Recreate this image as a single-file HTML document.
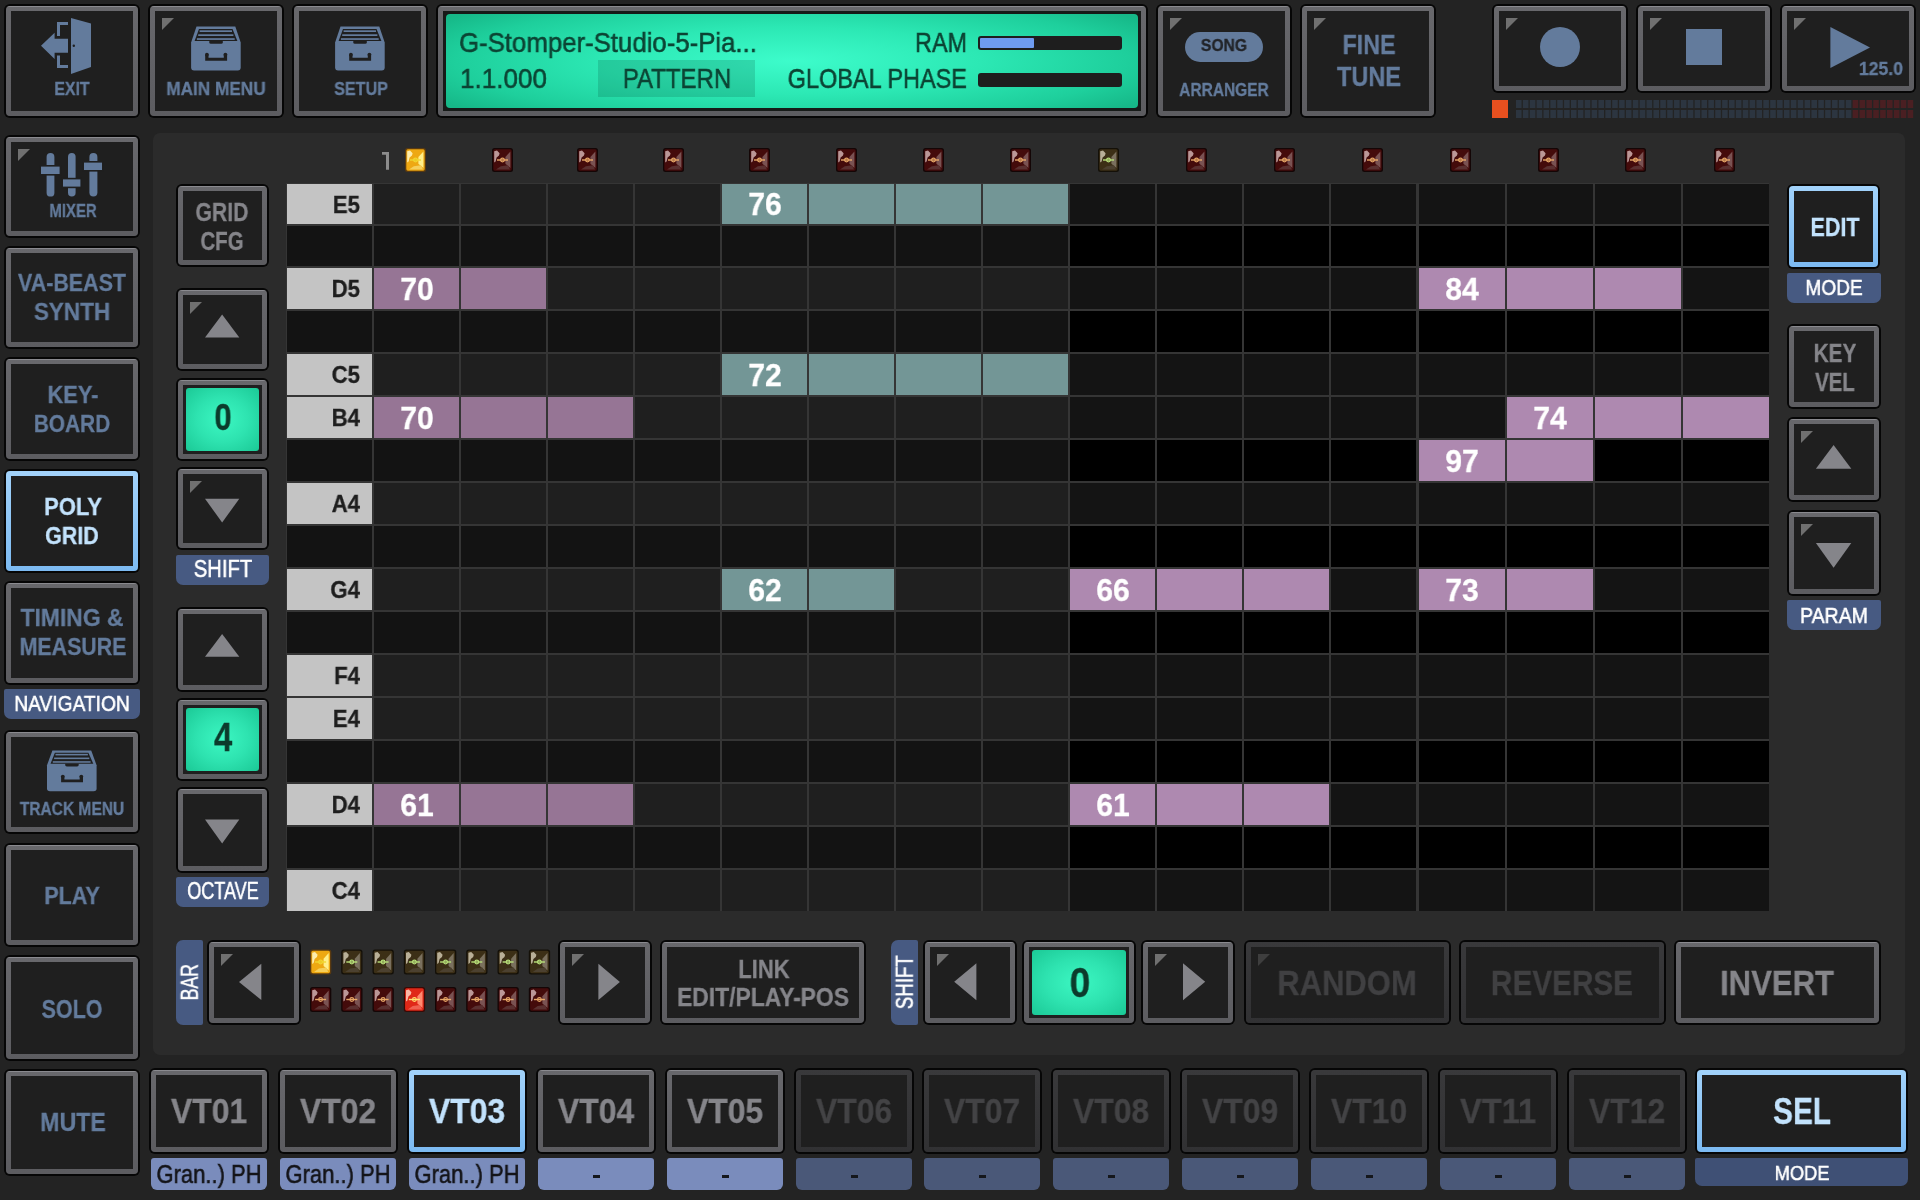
<!DOCTYPE html><html><head><meta charset="utf-8"><style>
html,body{margin:0;padding:0;width:1920px;height:1200px;overflow:hidden;background:#232323;font-family:"Liberation Sans",sans-serif;}
.t{position:absolute;white-space:nowrap;will-change:transform;}
.b{position:absolute;box-sizing:border-box;border:5px solid transparent;background:linear-gradient(#1f1f1f,#1f1f1f) padding-box,linear-gradient(#8a8a8f 0px,#8a8a8f 1px,#68686c 1px,#5c5c60 100%) border-box;border-radius:4px;box-shadow:0 0 0 2px #060606;}
.ba{background:linear-gradient(#1f1f1f,#1f1f1f) padding-box,linear-gradient(#a2d2fa,#7cbaf2) border-box;}
.bd{background:linear-gradient(#1f1f1f,#1f1f1f) padding-box,linear-gradient(#39393b,#313133) border-box;}
.cn{position:absolute;width:0;height:0;border-style:solid;border-width:6px 6px 6px 6px;}
.lb{position:absolute;}
.g{position:absolute;}
</style></head><body>

<div class="g" style="left:153px;top:133px;width:1752px;height:922px;background:#2b2b2b;border-radius:7px"></div>
<div class="b" style="left:6px;top:6px;width:132px;height:110px"></div>
<svg style="position:absolute;left:38px;top:14px" width="60" height="64" viewBox="38 14 60 64"><g fill="#637b9c"><polygon points="71,18 91,23.5 91,67 71,74"/><path d="M57,22 H68 V25 H60 V36 H57 Z"/><path d="M57,55.5 H60 V65 H68 V68 H57 Z"/><polygon points="41,45.7 54.6,32.7 54.6,38.8 68,38.8 68,52.7 54.6,52.7 54.6,59"/></g><circle cx="73.8" cy="45.8" r="1.2" fill="#1f1f1f"/></svg>
<div class="t" style="top:80.89px;font-size:17.73px;line-height:17.73px;color:#637b9c;font-weight:bold;left:-527.75px;width:1200px;text-align:center;transform:scaleX(0.8955);transform-origin:center center;-webkit-text-stroke:0.3px #637b9c;">EXIT</div>
<div class="b" style="left:150px;top:6px;width:132px;height:110px"></div>
<div class="cn" style="left:162px;top:18px;border-color:#707070 transparent transparent #707070"></div>
<svg style="position:absolute;left:180px;top:15px" width="70" height="65" viewBox="180 15 70 65"><g transform="translate(180,15) scale(1.0,1.0)"><path fill="#637b9c" d="M16.5,11.6 H55.3 L60.7,27.6 V52.5 Q60.7,55.5 57.7,55.5 H14.1 Q11.1,55.5 11.1,52.5 V27.6 Z"/><polygon fill="#1f1f1f" points="19,14.1 52.5,14.1 57.4,26 14.6,26"/><rect fill="#637b9c" x="19.6" y="15.3" width="32.4" height="1.7"/><rect fill="#637b9c" x="18.2" y="19.3" width="35.2" height="1.7"/><rect fill="#637b9c" x="16.9" y="23.2" width="37.8" height="1.7"/><path fill="#1f1f1f" d="M29.3,26 H42.8 V27.2 Q42.8,28.8 41.2,28.8 H30.9 Q29.3,28.8 29.3,27.2 Z"/><path fill="#1f1f1f" d="M25.2,40 H28.5 V42.8 H43.8 V40 H47.1 V45.8 H25.2 Z"/><circle cx="26.9" cy="39.6" r="1.9" fill="#1f1f1f"/><circle cx="45.4" cy="39.6" r="1.9" fill="#1f1f1f"/></g></svg>
<div class="t" style="top:80.89px;font-size:17.73px;line-height:17.73px;color:#637b9c;font-weight:bold;left:-383.60px;width:1200px;text-align:center;transform:scaleX(0.9693);transform-origin:center center;-webkit-text-stroke:0.3px #637b9c;">MAIN MENU</div>
<div class="b" style="left:294px;top:6px;width:132px;height:110px"></div>
<svg style="position:absolute;left:324px;top:15px" width="70" height="65" viewBox="324 15 70 65"><g transform="translate(324,15) scale(1.0,1.0)"><path fill="#637b9c" d="M16.5,11.6 H55.3 L60.7,27.6 V52.5 Q60.7,55.5 57.7,55.5 H14.1 Q11.1,55.5 11.1,52.5 V27.6 Z"/><polygon fill="#1f1f1f" points="19,14.1 52.5,14.1 57.4,26 14.6,26"/><rect fill="#637b9c" x="19.6" y="15.3" width="32.4" height="1.7"/><rect fill="#637b9c" x="18.2" y="19.3" width="35.2" height="1.7"/><rect fill="#637b9c" x="16.9" y="23.2" width="37.8" height="1.7"/><path fill="#1f1f1f" d="M29.3,26 H42.8 V27.2 Q42.8,28.8 41.2,28.8 H30.9 Q29.3,28.8 29.3,27.2 Z"/><path fill="#1f1f1f" d="M25.2,40 H28.5 V42.8 H43.8 V40 H47.1 V45.8 H25.2 Z"/><circle cx="26.9" cy="39.6" r="1.9" fill="#1f1f1f"/><circle cx="45.4" cy="39.6" r="1.9" fill="#1f1f1f"/></g></svg>
<div class="t" style="top:80.89px;font-size:17.73px;line-height:17.73px;color:#637b9c;font-weight:bold;left:-239.30px;width:1200px;text-align:center;transform:scaleX(0.9117);transform-origin:center center;-webkit-text-stroke:0.3px #637b9c;">SETUP</div>
<div class="b" style="left:438px;top:6px;width:708px;height:110px;background:linear-gradient(#161a18,#161a18) padding-box,linear-gradient(#8a8a8f 0px,#8a8a8f 1px,#68686c 1px,#5c5c60 100%) border-box;"></div>
<div class="g" style="left:446px;top:14px;width:692px;height:94px;border-radius:4px;background:radial-gradient(ellipse 420px 75px at 50% 50%, #3dfccb 0%, #2ce8b4 45%, #1ecf9c 80%, #16b888 100%);"></div>
<div class="t" style="top:28.77px;font-size:27.91px;line-height:27.91px;color:#0c4434;font-weight:normal;left:459.20px;width:1200px;text-align:left;transform:scaleX(0.9237);transform-origin:left center;-webkit-text-stroke:0.55px #0c4434;">G-Stomper-Studio-5-Pia...</div>
<div class="t" style="top:65.07px;font-size:27.91px;line-height:27.91px;color:#0c4434;font-weight:normal;left:460.30px;width:1200px;text-align:left;transform:scaleX(0.9345);transform-origin:left center;-webkit-text-stroke:0.55px #0c4434;">1.1.000</div>
<div class="g" style="left:598px;top:60px;width:157px;height:37px;background:rgba(0,60,40,0.17)"></div>
<div class="t" style="top:65.07px;font-size:27.91px;line-height:27.91px;color:#0c4434;font-weight:normal;left:77.00px;width:1200px;text-align:center;transform:scaleX(0.8596);transform-origin:center center;-webkit-text-stroke:0.55px #0c4434;">PATTERN</div>
<div class="t" style="top:28.77px;font-size:27.91px;line-height:27.91px;color:#0c4434;font-weight:normal;left:-233.00px;width:1200px;text-align:right;transform:scaleX(0.8386);transform-origin:right center;-webkit-text-stroke:0.55px #0c4434;">RAM</div>
<div class="t" style="top:65.07px;font-size:27.91px;line-height:27.91px;color:#0c4434;font-weight:normal;left:-233.00px;width:1200px;text-align:right;transform:scaleX(0.8422);transform-origin:right center;-webkit-text-stroke:0.55px #0c4434;">GLOBAL PHASE</div>
<div class="g" style="left:978px;top:36px;width:144px;height:14px;background:#1e1e1e;border-radius:3px"></div>
<div class="g" style="left:980px;top:38px;width:54px;height:10px;background:#6e9cf0;border-radius:1px"></div>
<div class="g" style="left:978px;top:73px;width:144px;height:14px;background:#1e1e1e;border-radius:3px"></div>
<div class="b" style="left:1158px;top:6px;width:132px;height:110px"></div>
<div class="cn" style="left:1170px;top:18px;border-color:#707070 transparent transparent #707070"></div>
<div class="g" style="left:1185px;top:32px;width:78px;height:30px;background:#637b9c;border-radius:15px"></div>
<div class="t" style="top:37.97px;font-size:16.57px;line-height:16.57px;color:#222428;font-weight:bold;left:624.00px;width:1200px;text-align:center;transform:scaleX(0.9427);transform-origin:center center;-webkit-text-stroke:0.3px #222428;">SONG</div>
<div class="t" style="top:79.96px;font-size:19.19px;line-height:19.19px;color:#637b9c;font-weight:bold;left:624.20px;width:1200px;text-align:center;transform:scaleX(0.8082);transform-origin:center center;-webkit-text-stroke:0.3px #637b9c;">ARRANGER</div>
<div class="b" style="left:1302px;top:6px;width:132px;height:110px"></div>
<div class="cn" style="left:1314px;top:18px;border-color:#707070 transparent transparent #707070"></div>
<div class="t" style="top:31.46px;font-size:27.33px;line-height:27.33px;color:#637b9c;font-weight:bold;left:768.50px;width:1200px;text-align:center;transform:scaleX(0.8514);transform-origin:center center;-webkit-text-stroke:0.3px #637b9c;">FINE</div>
<div class="t" style="top:63.36px;font-size:27.33px;line-height:27.33px;color:#637b9c;font-weight:bold;left:768.70px;width:1200px;text-align:center;transform:scaleX(0.8604);transform-origin:center center;-webkit-text-stroke:0.3px #637b9c;">TUNE</div>
<div class="b" style="left:1494px;top:6px;width:132px;height:85px"></div>
<div class="cn" style="left:1506px;top:18px;border-color:#707070 transparent transparent #707070"></div>
<svg style="position:absolute;left:1530px;top:20px" width="60" height="56" viewBox="1530 20 60 56"><circle cx="1560" cy="47" r="20" fill="#637b9c"/></svg>
<div class="b" style="left:1638px;top:6px;width:132px;height:85px"></div>
<div class="cn" style="left:1650px;top:18px;border-color:#707070 transparent transparent #707070"></div>
<div class="g" style="left:1686px;top:29px;width:36px;height:36px;background:#637b9c"></div>
<div class="b" style="left:1782px;top:6px;width:132px;height:85px"></div>
<div class="cn" style="left:1794px;top:18px;border-color:#707070 transparent transparent #707070"></div>
<svg style="position:absolute;left:1820px;top:20px" width="60" height="56" viewBox="1820 20 60 56"><polygon points="1830.4,27 1870,47.4 1830.4,68" fill="#637b9c"/></svg>
<div class="t" style="top:60.47px;font-size:18.46px;line-height:18.46px;color:#637b9c;font-weight:bold;left:703.20px;width:1200px;text-align:right;transform:scaleX(0.9527);transform-origin:right center;-webkit-text-stroke:0.3px #637b9c;">125.0</div>
<div class="g" style="left:1492px;top:100px;width:16px;height:18px;background:#e8501f"></div>
<svg style="position:absolute;left:1510px;top:96px" width="410" height="26" viewBox="1510 96 410 26"><rect x="1516.00" y="100" width="5.6" height="8" fill="#2c3540"/><rect x="1516.00" y="110" width="5.6" height="8" fill="#2c3540"/><rect x="1522.87" y="100" width="5.6" height="8" fill="#2c3540"/><rect x="1522.87" y="110" width="5.6" height="8" fill="#2c3540"/><rect x="1529.74" y="100" width="5.6" height="8" fill="#2c3540"/><rect x="1529.74" y="110" width="5.6" height="8" fill="#2c3540"/><rect x="1536.61" y="100" width="5.6" height="8" fill="#2c3540"/><rect x="1536.61" y="110" width="5.6" height="8" fill="#2c3540"/><rect x="1543.48" y="100" width="5.6" height="8" fill="#2c3540"/><rect x="1543.48" y="110" width="5.6" height="8" fill="#2c3540"/><rect x="1550.35" y="100" width="5.6" height="8" fill="#2c3540"/><rect x="1550.35" y="110" width="5.6" height="8" fill="#2c3540"/><rect x="1557.22" y="100" width="5.6" height="8" fill="#2c3540"/><rect x="1557.22" y="110" width="5.6" height="8" fill="#2c3540"/><rect x="1564.09" y="100" width="5.6" height="8" fill="#2c3540"/><rect x="1564.09" y="110" width="5.6" height="8" fill="#2c3540"/><rect x="1570.96" y="100" width="5.6" height="8" fill="#2c3540"/><rect x="1570.96" y="110" width="5.6" height="8" fill="#2c3540"/><rect x="1577.83" y="100" width="5.6" height="8" fill="#2c3540"/><rect x="1577.83" y="110" width="5.6" height="8" fill="#2c3540"/><rect x="1584.70" y="100" width="5.6" height="8" fill="#2c3540"/><rect x="1584.70" y="110" width="5.6" height="8" fill="#2c3540"/><rect x="1591.57" y="100" width="5.6" height="8" fill="#2c3540"/><rect x="1591.57" y="110" width="5.6" height="8" fill="#2c3540"/><rect x="1598.44" y="100" width="5.6" height="8" fill="#2c3540"/><rect x="1598.44" y="110" width="5.6" height="8" fill="#2c3540"/><rect x="1605.31" y="100" width="5.6" height="8" fill="#2c3540"/><rect x="1605.31" y="110" width="5.6" height="8" fill="#2c3540"/><rect x="1612.18" y="100" width="5.6" height="8" fill="#2c3540"/><rect x="1612.18" y="110" width="5.6" height="8" fill="#2c3540"/><rect x="1619.05" y="100" width="5.6" height="8" fill="#2c3540"/><rect x="1619.05" y="110" width="5.6" height="8" fill="#2c3540"/><rect x="1625.92" y="100" width="5.6" height="8" fill="#2c3540"/><rect x="1625.92" y="110" width="5.6" height="8" fill="#2c3540"/><rect x="1632.79" y="100" width="5.6" height="8" fill="#2c3540"/><rect x="1632.79" y="110" width="5.6" height="8" fill="#2c3540"/><rect x="1639.66" y="100" width="5.6" height="8" fill="#2c3540"/><rect x="1639.66" y="110" width="5.6" height="8" fill="#2c3540"/><rect x="1646.53" y="100" width="5.6" height="8" fill="#2c3540"/><rect x="1646.53" y="110" width="5.6" height="8" fill="#2c3540"/><rect x="1653.40" y="100" width="5.6" height="8" fill="#2c3540"/><rect x="1653.40" y="110" width="5.6" height="8" fill="#2c3540"/><rect x="1660.27" y="100" width="5.6" height="8" fill="#2c3540"/><rect x="1660.27" y="110" width="5.6" height="8" fill="#2c3540"/><rect x="1667.14" y="100" width="5.6" height="8" fill="#2c3540"/><rect x="1667.14" y="110" width="5.6" height="8" fill="#2c3540"/><rect x="1674.01" y="100" width="5.6" height="8" fill="#2c3540"/><rect x="1674.01" y="110" width="5.6" height="8" fill="#2c3540"/><rect x="1680.88" y="100" width="5.6" height="8" fill="#2c3540"/><rect x="1680.88" y="110" width="5.6" height="8" fill="#2c3540"/><rect x="1687.75" y="100" width="5.6" height="8" fill="#2c3540"/><rect x="1687.75" y="110" width="5.6" height="8" fill="#2c3540"/><rect x="1694.62" y="100" width="5.6" height="8" fill="#2c3540"/><rect x="1694.62" y="110" width="5.6" height="8" fill="#2c3540"/><rect x="1701.49" y="100" width="5.6" height="8" fill="#2c3540"/><rect x="1701.49" y="110" width="5.6" height="8" fill="#2c3540"/><rect x="1708.36" y="100" width="5.6" height="8" fill="#2c3540"/><rect x="1708.36" y="110" width="5.6" height="8" fill="#2c3540"/><rect x="1715.23" y="100" width="5.6" height="8" fill="#2c3540"/><rect x="1715.23" y="110" width="5.6" height="8" fill="#2c3540"/><rect x="1722.10" y="100" width="5.6" height="8" fill="#2c3540"/><rect x="1722.10" y="110" width="5.6" height="8" fill="#2c3540"/><rect x="1728.97" y="100" width="5.6" height="8" fill="#2c3540"/><rect x="1728.97" y="110" width="5.6" height="8" fill="#2c3540"/><rect x="1735.84" y="100" width="5.6" height="8" fill="#2c3540"/><rect x="1735.84" y="110" width="5.6" height="8" fill="#2c3540"/><rect x="1742.71" y="100" width="5.6" height="8" fill="#2c3540"/><rect x="1742.71" y="110" width="5.6" height="8" fill="#2c3540"/><rect x="1749.58" y="100" width="5.6" height="8" fill="#2c3540"/><rect x="1749.58" y="110" width="5.6" height="8" fill="#2c3540"/><rect x="1756.45" y="100" width="5.6" height="8" fill="#2c3540"/><rect x="1756.45" y="110" width="5.6" height="8" fill="#2c3540"/><rect x="1763.32" y="100" width="5.6" height="8" fill="#2c3540"/><rect x="1763.32" y="110" width="5.6" height="8" fill="#2c3540"/><rect x="1770.19" y="100" width="5.6" height="8" fill="#2c3540"/><rect x="1770.19" y="110" width="5.6" height="8" fill="#2c3540"/><rect x="1777.06" y="100" width="5.6" height="8" fill="#2c3540"/><rect x="1777.06" y="110" width="5.6" height="8" fill="#2c3540"/><rect x="1783.93" y="100" width="5.6" height="8" fill="#2c3540"/><rect x="1783.93" y="110" width="5.6" height="8" fill="#2c3540"/><rect x="1790.80" y="100" width="5.6" height="8" fill="#2c3540"/><rect x="1790.80" y="110" width="5.6" height="8" fill="#2c3540"/><rect x="1797.67" y="100" width="5.6" height="8" fill="#2c3540"/><rect x="1797.67" y="110" width="5.6" height="8" fill="#2c3540"/><rect x="1804.54" y="100" width="5.6" height="8" fill="#2c3540"/><rect x="1804.54" y="110" width="5.6" height="8" fill="#2c3540"/><rect x="1811.41" y="100" width="5.6" height="8" fill="#2c3540"/><rect x="1811.41" y="110" width="5.6" height="8" fill="#2c3540"/><rect x="1818.28" y="100" width="5.6" height="8" fill="#2c3540"/><rect x="1818.28" y="110" width="5.6" height="8" fill="#2c3540"/><rect x="1825.15" y="100" width="5.6" height="8" fill="#2c3540"/><rect x="1825.15" y="110" width="5.6" height="8" fill="#2c3540"/><rect x="1832.02" y="100" width="5.6" height="8" fill="#2c3540"/><rect x="1832.02" y="110" width="5.6" height="8" fill="#2c3540"/><rect x="1838.89" y="100" width="5.6" height="8" fill="#2c3540"/><rect x="1838.89" y="110" width="5.6" height="8" fill="#2c3540"/><rect x="1845.76" y="100" width="5.6" height="8" fill="#2c3540"/><rect x="1845.76" y="110" width="5.6" height="8" fill="#2c3540"/><rect x="1852.63" y="100" width="5.6" height="8" fill="#4a1f22"/><rect x="1852.63" y="110" width="5.6" height="8" fill="#4a1f22"/><rect x="1859.50" y="100" width="5.6" height="8" fill="#4a1f22"/><rect x="1859.50" y="110" width="5.6" height="8" fill="#4a1f22"/><rect x="1866.37" y="100" width="5.6" height="8" fill="#4a1f22"/><rect x="1866.37" y="110" width="5.6" height="8" fill="#4a1f22"/><rect x="1873.24" y="100" width="5.6" height="8" fill="#4a1f22"/><rect x="1873.24" y="110" width="5.6" height="8" fill="#4a1f22"/><rect x="1880.11" y="100" width="5.6" height="8" fill="#4a1f22"/><rect x="1880.11" y="110" width="5.6" height="8" fill="#4a1f22"/><rect x="1886.98" y="100" width="5.6" height="8" fill="#4a1f22"/><rect x="1886.98" y="110" width="5.6" height="8" fill="#4a1f22"/><rect x="1893.85" y="100" width="5.6" height="8" fill="#4a1f22"/><rect x="1893.85" y="110" width="5.6" height="8" fill="#4a1f22"/><rect x="1900.72" y="100" width="5.6" height="8" fill="#4a1f22"/><rect x="1900.72" y="110" width="5.6" height="8" fill="#4a1f22"/><rect x="1907.59" y="100" width="5.6" height="8" fill="#4a1f22"/><rect x="1907.59" y="110" width="5.6" height="8" fill="#4a1f22"/></svg>
<div class="b" style="left:6px;top:137px;width:132px;height:99px"></div>
<div class="cn" style="left:18px;top:149px;border-color:#707070 transparent transparent #707070"></div>
<svg style="position:absolute;left:36px;top:150px" width="72" height="50" viewBox="36 150 72 50"><g fill="#637b9c"><rect x="46.6" y="153" width="7.8" height="43.6" rx="3.9"/><rect x="68" y="153" width="7.6" height="43.6" rx="3.8"/><rect x="89.4" y="153" width="8" height="43.6" rx="4"/></g><g fill="#1f1f1f"><rect x="39.5" y="165" width="21.6" height="10.6"/><rect x="61.5" y="177.8" width="20.4" height="10.4"/><rect x="82.5" y="161" width="21" height="10.6"/></g><g fill="#637b9c"><rect x="41" y="166.6" width="18.6" height="7.4"/><rect x="63" y="179.4" width="17.4" height="7.2"/><rect x="84" y="162.6" width="18" height="7.4"/></g></svg>
<div class="t" style="top:203.23px;font-size:17.44px;line-height:17.44px;color:#637b9c;font-weight:bold;left:-527.30px;width:1200px;text-align:center;transform:scaleX(0.8581);transform-origin:center center;-webkit-text-stroke:0.3px #637b9c;">MIXER</div>
<div class="b" style="left:6px;top:248px;width:132px;height:99px"></div>
<div class="t" style="top:271.08px;font-size:24.71px;line-height:24.71px;color:#637b9c;font-weight:bold;left:-527.60px;width:1200px;text-align:center;transform:scaleX(0.8677);transform-origin:center center;-webkit-text-stroke:0.3px #637b9c;">VA-BEAST</div>
<div class="t" style="top:300.08px;font-size:24.71px;line-height:24.71px;color:#637b9c;font-weight:bold;left:-527.80px;width:1200px;text-align:center;transform:scaleX(0.9123);transform-origin:center center;-webkit-text-stroke:0.3px #637b9c;">SYNTH</div>
<div class="b" style="left:6px;top:359px;width:132px;height:100px"></div>
<div class="t" style="top:383.08px;font-size:24.71px;line-height:24.71px;color:#637b9c;font-weight:bold;left:-527.50px;width:1200px;text-align:center;transform:scaleX(0.8843);transform-origin:center center;-webkit-text-stroke:0.3px #637b9c;">KEY-</div>
<div class="t" style="top:412.08px;font-size:24.71px;line-height:24.71px;color:#637b9c;font-weight:bold;left:-527.80px;width:1200px;text-align:center;transform:scaleX(0.8432);transform-origin:center center;-webkit-text-stroke:0.3px #637b9c;">BOARD</div>
<div class="b ba" style="left:6px;top:471px;width:132px;height:100px"></div>
<div class="t" style="top:495.08px;font-size:24.71px;line-height:24.71px;color:#c2e2fc;font-weight:bold;left:-527.40px;width:1200px;text-align:center;transform:scaleX(0.8922);transform-origin:center center;-webkit-text-stroke:0.3px #c2e2fc;">POLY</div>
<div class="t" style="top:524.08px;font-size:24.71px;line-height:24.71px;color:#c2e2fc;font-weight:bold;left:-527.70px;width:1200px;text-align:center;transform:scaleX(0.8645);transform-origin:center center;-webkit-text-stroke:0.3px #c2e2fc;">GRID</div>
<div class="b" style="left:6px;top:583px;width:132px;height:100px"></div>
<div class="t" style="top:606.08px;font-size:24.71px;line-height:24.71px;color:#637b9c;font-weight:bold;left:-528.00px;width:1200px;text-align:center;transform:scaleX(0.9263);transform-origin:center center;-webkit-text-stroke:0.3px #637b9c;">TIMING &amp;</div>
<div class="t" style="top:635.08px;font-size:24.71px;line-height:24.71px;color:#637b9c;font-weight:bold;left:-527.50px;width:1200px;text-align:center;transform:scaleX(0.8643);transform-origin:center center;-webkit-text-stroke:0.3px #637b9c;">MEASURE</div>
<div class="lb" style="left:4px;top:689px;width:136px;height:30px;background:#475a82;border-radius:2px 2px 7px 7px"></div>
<div class="t" style="top:692.26px;font-size:22.97px;line-height:22.97px;color:#fff;font-weight:normal;left:-528.00px;width:1200px;text-align:center;transform:scaleX(0.8356);transform-origin:center center;-webkit-text-stroke:0.55px #fff;">NAVIGATION</div>
<div class="b" style="left:6px;top:732px;width:132px;height:100px"></div>
<svg style="position:absolute;left:36px;top:740px" width="72" height="56" viewBox="36 740 72 56"><g transform="translate(35.9,739.6) scale(1.0,0.93)"><path fill="#637b9c" d="M16.5,11.6 H55.3 L60.7,27.6 V52.5 Q60.7,55.5 57.7,55.5 H14.1 Q11.1,55.5 11.1,52.5 V27.6 Z"/><polygon fill="#1f1f1f" points="19,14.1 52.5,14.1 57.4,26 14.6,26"/><rect fill="#637b9c" x="19.6" y="15.3" width="32.4" height="1.7"/><rect fill="#637b9c" x="18.2" y="19.3" width="35.2" height="1.7"/><rect fill="#637b9c" x="16.9" y="23.2" width="37.8" height="1.7"/><path fill="#1f1f1f" d="M29.3,26 H42.8 V27.2 Q42.8,28.8 41.2,28.8 H30.9 Q29.3,28.8 29.3,27.2 Z"/><path fill="#1f1f1f" d="M25.2,40 H28.5 V42.8 H43.8 V40 H47.1 V45.8 H25.2 Z"/><circle cx="26.9" cy="39.6" r="1.9" fill="#1f1f1f"/><circle cx="45.4" cy="39.6" r="1.9" fill="#1f1f1f"/></g></svg>
<div class="t" style="top:800.79px;font-size:17.73px;line-height:17.73px;color:#637b9c;font-weight:bold;left:-528.00px;width:1200px;text-align:center;transform:scaleX(0.8759);transform-origin:center center;-webkit-text-stroke:0.3px #637b9c;">TRACK MENU</div>
<div class="b" style="left:6px;top:845px;width:132px;height:100px"></div>
<div class="t" style="top:884.17px;font-size:24.13px;line-height:24.13px;color:#637b9c;font-weight:bold;left:-527.55px;width:1200px;text-align:center;transform:scaleX(0.8933);transform-origin:center center;-webkit-text-stroke:0.3px #637b9c;">PLAY</div>
<div class="b" style="left:6px;top:957px;width:132px;height:102px"></div>
<div class="t" style="top:996.53px;font-size:25.00px;line-height:25.00px;color:#637b9c;font-weight:bold;left:-528.00px;width:1200px;text-align:center;transform:scaleX(0.8582);transform-origin:center center;-webkit-text-stroke:0.3px #637b9c;">SOLO</div>
<div class="b" style="left:6px;top:1071px;width:132px;height:103px"></div>
<div class="t" style="top:1110.03px;font-size:25.00px;line-height:25.00px;color:#637b9c;font-weight:bold;left:-527.25px;width:1200px;text-align:center;transform:scaleX(0.9248);transform-origin:center center;-webkit-text-stroke:0.3px #637b9c;">MUTE</div>
<div class="b" style="left:178px;top:186px;width:89px;height:79px"></div>
<div class="t" style="top:199.71px;font-size:25.15px;line-height:25.15px;color:#85858a;font-weight:bold;left:-377.80px;width:1200px;text-align:center;transform:scaleX(0.8431);transform-origin:center center;-webkit-text-stroke:0.3px #85858a;">GRID</div>
<div class="t" style="top:228.71px;font-size:25.15px;line-height:25.15px;color:#85858a;font-weight:bold;left:-377.65px;width:1200px;text-align:center;transform:scaleX(0.8157);transform-origin:center center;-webkit-text-stroke:0.3px #85858a;">CFG</div>
<div class="b" style="left:178px;top:290px;width:89px;height:79px"></div>
<div class="cn" style="left:190px;top:302px;border-color:#707070 transparent transparent #707070"></div>
<svg style="position:absolute;left:200px;top:310px" width="45" height="32" viewBox="200 310 45 32"><polygon points="205,337.4 239.3,337.4 222.15,314.6" fill="#85858a"/></svg>
<div class="b" style="left:178px;top:380px;width:89px;height:79px"></div>
<div class="g" style="left:186px;top:388px;width:73px;height:63px;border-radius:3px;background:radial-gradient(ellipse at 50% 50%, #3cf7c2 0%, #2ee3b0 50%, #1bc996 100%);"></div>
<div class="t" style="top:398.80px;font-size:37.79px;line-height:37.79px;color:#0c3b2c;font-weight:bold;left:-376.90px;width:1200px;text-align:center;transform:scaleX(0.8234);transform-origin:center center;-webkit-text-stroke:0.3px #0c3b2c;">0</div>
<div class="b" style="left:178px;top:469px;width:89px;height:79px"></div>
<div class="cn" style="left:190px;top:481px;border-color:#707070 transparent transparent #707070"></div>
<svg style="position:absolute;left:200px;top:494px" width="45" height="32" viewBox="200 494 45 32"><polygon points="205,498.8 239.3,498.8 222.15,522.5" fill="#85858a"/></svg>
<div class="lb" style="left:176px;top:555px;width:93px;height:30px;background:#475a82;border-radius:2px 2px 7px 7px"></div>
<div class="t" style="top:558.04px;font-size:23.69px;line-height:23.69px;color:#fff;font-weight:normal;left:-377.50px;width:1200px;text-align:center;transform:scaleX(0.8547);transform-origin:center center;-webkit-text-stroke:0.55px #fff;">SHIFT</div>
<div class="b" style="left:178px;top:609px;width:89px;height:81px"></div>
<svg style="position:absolute;left:200px;top:630px" width="45" height="32" viewBox="200 630 45 32"><polygon points="205,656.8 239.3,656.8 222.15,634" fill="#85858a"/></svg>
<div class="b" style="left:178px;top:700px;width:89px;height:79px"></div>
<div class="g" style="left:186px;top:708px;width:73px;height:63px;border-radius:3px;background:radial-gradient(ellipse at 50% 50%, #3cf7c2 0%, #2ee3b0 50%, #1bc996 100%);"></div>
<div class="t" style="top:718.46px;font-size:39.97px;line-height:39.97px;color:#0c3b2c;font-weight:bold;left:-376.80px;width:1200px;text-align:center;transform:scaleX(0.8279);transform-origin:center center;-webkit-text-stroke:0.3px #0c3b2c;">4</div>
<div class="b" style="left:178px;top:789px;width:89px;height:82px"></div>
<svg style="position:absolute;left:200px;top:815px" width="45" height="32" viewBox="200 815 45 32"><polygon points="205,819.6 239.3,819.6 222.15,843.6" fill="#85858a"/></svg>
<div class="lb" style="left:176px;top:877px;width:93px;height:30px;background:#475a82;border-radius:2px 2px 7px 7px"></div>
<div class="t" style="top:880.31px;font-size:23.26px;line-height:23.26px;color:#fff;font-weight:normal;left:-377.50px;width:1200px;text-align:center;transform:scaleX(0.7758);transform-origin:center center;-webkit-text-stroke:0.55px #fff;">OCTAVE</div>
<div class="g" style="left:286px;top:183px;width:1483px;height:728px;background:#353535"></div>
<div class="g" style="left:287px;top:184px;width:85px;height:40px;background:#c4c4c4"></div><div class="g" style="left:374px;top:184px;width:85px;height:40px;background:#1f1f1f"></div><div class="g" style="left:461px;top:184px;width:85px;height:40px;background:#1f1f1f"></div><div class="g" style="left:548px;top:184px;width:85px;height:40px;background:#1f1f1f"></div><div class="g" style="left:635px;top:184px;width:85px;height:40px;background:#1f1f1f"></div><div class="g" style="left:722px;top:184px;width:85px;height:40px;background:#1f1f1f"></div><div class="g" style="left:809px;top:184px;width:85px;height:40px;background:#1f1f1f"></div><div class="g" style="left:896px;top:184px;width:85px;height:40px;background:#1f1f1f"></div><div class="g" style="left:983px;top:184px;width:85px;height:40px;background:#1f1f1f"></div><div class="g" style="left:1070px;top:184px;width:85px;height:40px;background:#141414"></div><div class="g" style="left:1157px;top:184px;width:85px;height:40px;background:#141414"></div><div class="g" style="left:1244px;top:184px;width:85px;height:40px;background:#141414"></div><div class="g" style="left:1331px;top:184px;width:85px;height:40px;background:#141414"></div><div class="g" style="left:1419px;top:184px;width:86px;height:40px;background:#141414"></div><div class="g" style="left:1507px;top:184px;width:86px;height:40px;background:#141414"></div><div class="g" style="left:1595px;top:184px;width:86px;height:40px;background:#141414"></div><div class="g" style="left:1683px;top:184px;width:86px;height:40px;background:#141414"></div><div class="g" style="left:287px;top:226px;width:85px;height:40px;background:#131313"></div><div class="g" style="left:374px;top:226px;width:85px;height:40px;background:#131313"></div><div class="g" style="left:461px;top:226px;width:85px;height:40px;background:#131313"></div><div class="g" style="left:548px;top:226px;width:85px;height:40px;background:#131313"></div><div class="g" style="left:635px;top:226px;width:85px;height:40px;background:#131313"></div><div class="g" style="left:722px;top:226px;width:85px;height:40px;background:#131313"></div><div class="g" style="left:809px;top:226px;width:85px;height:40px;background:#131313"></div><div class="g" style="left:896px;top:226px;width:85px;height:40px;background:#131313"></div><div class="g" style="left:983px;top:226px;width:85px;height:40px;background:#131313"></div><div class="g" style="left:1070px;top:226px;width:85px;height:40px;background:#000000"></div><div class="g" style="left:1157px;top:226px;width:85px;height:40px;background:#000000"></div><div class="g" style="left:1244px;top:226px;width:85px;height:40px;background:#000000"></div><div class="g" style="left:1331px;top:226px;width:85px;height:40px;background:#000000"></div><div class="g" style="left:1419px;top:226px;width:86px;height:40px;background:#000000"></div><div class="g" style="left:1507px;top:226px;width:86px;height:40px;background:#000000"></div><div class="g" style="left:1595px;top:226px;width:86px;height:40px;background:#000000"></div><div class="g" style="left:1683px;top:226px;width:86px;height:40px;background:#000000"></div><div class="g" style="left:287px;top:268px;width:85px;height:41px;background:#c4c4c4"></div><div class="g" style="left:374px;top:268px;width:85px;height:41px;background:#1f1f1f"></div><div class="g" style="left:461px;top:268px;width:85px;height:41px;background:#1f1f1f"></div><div class="g" style="left:548px;top:268px;width:85px;height:41px;background:#1f1f1f"></div><div class="g" style="left:635px;top:268px;width:85px;height:41px;background:#1f1f1f"></div><div class="g" style="left:722px;top:268px;width:85px;height:41px;background:#1f1f1f"></div><div class="g" style="left:809px;top:268px;width:85px;height:41px;background:#1f1f1f"></div><div class="g" style="left:896px;top:268px;width:85px;height:41px;background:#1f1f1f"></div><div class="g" style="left:983px;top:268px;width:85px;height:41px;background:#1f1f1f"></div><div class="g" style="left:1070px;top:268px;width:85px;height:41px;background:#141414"></div><div class="g" style="left:1157px;top:268px;width:85px;height:41px;background:#141414"></div><div class="g" style="left:1244px;top:268px;width:85px;height:41px;background:#141414"></div><div class="g" style="left:1331px;top:268px;width:85px;height:41px;background:#141414"></div><div class="g" style="left:1419px;top:268px;width:86px;height:41px;background:#141414"></div><div class="g" style="left:1507px;top:268px;width:86px;height:41px;background:#141414"></div><div class="g" style="left:1595px;top:268px;width:86px;height:41px;background:#141414"></div><div class="g" style="left:1683px;top:268px;width:86px;height:41px;background:#141414"></div><div class="g" style="left:287px;top:311px;width:85px;height:41px;background:#131313"></div><div class="g" style="left:374px;top:311px;width:85px;height:41px;background:#131313"></div><div class="g" style="left:461px;top:311px;width:85px;height:41px;background:#131313"></div><div class="g" style="left:548px;top:311px;width:85px;height:41px;background:#131313"></div><div class="g" style="left:635px;top:311px;width:85px;height:41px;background:#131313"></div><div class="g" style="left:722px;top:311px;width:85px;height:41px;background:#131313"></div><div class="g" style="left:809px;top:311px;width:85px;height:41px;background:#131313"></div><div class="g" style="left:896px;top:311px;width:85px;height:41px;background:#131313"></div><div class="g" style="left:983px;top:311px;width:85px;height:41px;background:#131313"></div><div class="g" style="left:1070px;top:311px;width:85px;height:41px;background:#000000"></div><div class="g" style="left:1157px;top:311px;width:85px;height:41px;background:#000000"></div><div class="g" style="left:1244px;top:311px;width:85px;height:41px;background:#000000"></div><div class="g" style="left:1331px;top:311px;width:85px;height:41px;background:#000000"></div><div class="g" style="left:1419px;top:311px;width:86px;height:41px;background:#000000"></div><div class="g" style="left:1507px;top:311px;width:86px;height:41px;background:#000000"></div><div class="g" style="left:1595px;top:311px;width:86px;height:41px;background:#000000"></div><div class="g" style="left:1683px;top:311px;width:86px;height:41px;background:#000000"></div><div class="g" style="left:287px;top:354px;width:85px;height:41px;background:#c4c4c4"></div><div class="g" style="left:374px;top:354px;width:85px;height:41px;background:#1f1f1f"></div><div class="g" style="left:461px;top:354px;width:85px;height:41px;background:#1f1f1f"></div><div class="g" style="left:548px;top:354px;width:85px;height:41px;background:#1f1f1f"></div><div class="g" style="left:635px;top:354px;width:85px;height:41px;background:#1f1f1f"></div><div class="g" style="left:722px;top:354px;width:85px;height:41px;background:#1f1f1f"></div><div class="g" style="left:809px;top:354px;width:85px;height:41px;background:#1f1f1f"></div><div class="g" style="left:896px;top:354px;width:85px;height:41px;background:#1f1f1f"></div><div class="g" style="left:983px;top:354px;width:85px;height:41px;background:#1f1f1f"></div><div class="g" style="left:1070px;top:354px;width:85px;height:41px;background:#141414"></div><div class="g" style="left:1157px;top:354px;width:85px;height:41px;background:#141414"></div><div class="g" style="left:1244px;top:354px;width:85px;height:41px;background:#141414"></div><div class="g" style="left:1331px;top:354px;width:85px;height:41px;background:#141414"></div><div class="g" style="left:1419px;top:354px;width:86px;height:41px;background:#141414"></div><div class="g" style="left:1507px;top:354px;width:86px;height:41px;background:#141414"></div><div class="g" style="left:1595px;top:354px;width:86px;height:41px;background:#141414"></div><div class="g" style="left:1683px;top:354px;width:86px;height:41px;background:#141414"></div><div class="g" style="left:287px;top:397px;width:85px;height:41px;background:#c4c4c4"></div><div class="g" style="left:374px;top:397px;width:85px;height:41px;background:#1f1f1f"></div><div class="g" style="left:461px;top:397px;width:85px;height:41px;background:#1f1f1f"></div><div class="g" style="left:548px;top:397px;width:85px;height:41px;background:#1f1f1f"></div><div class="g" style="left:635px;top:397px;width:85px;height:41px;background:#1f1f1f"></div><div class="g" style="left:722px;top:397px;width:85px;height:41px;background:#1f1f1f"></div><div class="g" style="left:809px;top:397px;width:85px;height:41px;background:#1f1f1f"></div><div class="g" style="left:896px;top:397px;width:85px;height:41px;background:#1f1f1f"></div><div class="g" style="left:983px;top:397px;width:85px;height:41px;background:#1f1f1f"></div><div class="g" style="left:1070px;top:397px;width:85px;height:41px;background:#141414"></div><div class="g" style="left:1157px;top:397px;width:85px;height:41px;background:#141414"></div><div class="g" style="left:1244px;top:397px;width:85px;height:41px;background:#141414"></div><div class="g" style="left:1331px;top:397px;width:85px;height:41px;background:#141414"></div><div class="g" style="left:1419px;top:397px;width:86px;height:41px;background:#141414"></div><div class="g" style="left:1507px;top:397px;width:86px;height:41px;background:#141414"></div><div class="g" style="left:1595px;top:397px;width:86px;height:41px;background:#141414"></div><div class="g" style="left:1683px;top:397px;width:86px;height:41px;background:#141414"></div><div class="g" style="left:287px;top:440px;width:85px;height:41px;background:#131313"></div><div class="g" style="left:374px;top:440px;width:85px;height:41px;background:#131313"></div><div class="g" style="left:461px;top:440px;width:85px;height:41px;background:#131313"></div><div class="g" style="left:548px;top:440px;width:85px;height:41px;background:#131313"></div><div class="g" style="left:635px;top:440px;width:85px;height:41px;background:#131313"></div><div class="g" style="left:722px;top:440px;width:85px;height:41px;background:#131313"></div><div class="g" style="left:809px;top:440px;width:85px;height:41px;background:#131313"></div><div class="g" style="left:896px;top:440px;width:85px;height:41px;background:#131313"></div><div class="g" style="left:983px;top:440px;width:85px;height:41px;background:#131313"></div><div class="g" style="left:1070px;top:440px;width:85px;height:41px;background:#000000"></div><div class="g" style="left:1157px;top:440px;width:85px;height:41px;background:#000000"></div><div class="g" style="left:1244px;top:440px;width:85px;height:41px;background:#000000"></div><div class="g" style="left:1331px;top:440px;width:85px;height:41px;background:#000000"></div><div class="g" style="left:1419px;top:440px;width:86px;height:41px;background:#000000"></div><div class="g" style="left:1507px;top:440px;width:86px;height:41px;background:#000000"></div><div class="g" style="left:1595px;top:440px;width:86px;height:41px;background:#000000"></div><div class="g" style="left:1683px;top:440px;width:86px;height:41px;background:#000000"></div><div class="g" style="left:287px;top:483px;width:85px;height:41px;background:#c4c4c4"></div><div class="g" style="left:374px;top:483px;width:85px;height:41px;background:#1f1f1f"></div><div class="g" style="left:461px;top:483px;width:85px;height:41px;background:#1f1f1f"></div><div class="g" style="left:548px;top:483px;width:85px;height:41px;background:#1f1f1f"></div><div class="g" style="left:635px;top:483px;width:85px;height:41px;background:#1f1f1f"></div><div class="g" style="left:722px;top:483px;width:85px;height:41px;background:#1f1f1f"></div><div class="g" style="left:809px;top:483px;width:85px;height:41px;background:#1f1f1f"></div><div class="g" style="left:896px;top:483px;width:85px;height:41px;background:#1f1f1f"></div><div class="g" style="left:983px;top:483px;width:85px;height:41px;background:#1f1f1f"></div><div class="g" style="left:1070px;top:483px;width:85px;height:41px;background:#141414"></div><div class="g" style="left:1157px;top:483px;width:85px;height:41px;background:#141414"></div><div class="g" style="left:1244px;top:483px;width:85px;height:41px;background:#141414"></div><div class="g" style="left:1331px;top:483px;width:85px;height:41px;background:#141414"></div><div class="g" style="left:1419px;top:483px;width:86px;height:41px;background:#141414"></div><div class="g" style="left:1507px;top:483px;width:86px;height:41px;background:#141414"></div><div class="g" style="left:1595px;top:483px;width:86px;height:41px;background:#141414"></div><div class="g" style="left:1683px;top:483px;width:86px;height:41px;background:#141414"></div><div class="g" style="left:287px;top:526px;width:85px;height:41px;background:#131313"></div><div class="g" style="left:374px;top:526px;width:85px;height:41px;background:#131313"></div><div class="g" style="left:461px;top:526px;width:85px;height:41px;background:#131313"></div><div class="g" style="left:548px;top:526px;width:85px;height:41px;background:#131313"></div><div class="g" style="left:635px;top:526px;width:85px;height:41px;background:#131313"></div><div class="g" style="left:722px;top:526px;width:85px;height:41px;background:#131313"></div><div class="g" style="left:809px;top:526px;width:85px;height:41px;background:#131313"></div><div class="g" style="left:896px;top:526px;width:85px;height:41px;background:#131313"></div><div class="g" style="left:983px;top:526px;width:85px;height:41px;background:#131313"></div><div class="g" style="left:1070px;top:526px;width:85px;height:41px;background:#000000"></div><div class="g" style="left:1157px;top:526px;width:85px;height:41px;background:#000000"></div><div class="g" style="left:1244px;top:526px;width:85px;height:41px;background:#000000"></div><div class="g" style="left:1331px;top:526px;width:85px;height:41px;background:#000000"></div><div class="g" style="left:1419px;top:526px;width:86px;height:41px;background:#000000"></div><div class="g" style="left:1507px;top:526px;width:86px;height:41px;background:#000000"></div><div class="g" style="left:1595px;top:526px;width:86px;height:41px;background:#000000"></div><div class="g" style="left:1683px;top:526px;width:86px;height:41px;background:#000000"></div><div class="g" style="left:287px;top:569px;width:85px;height:41px;background:#c4c4c4"></div><div class="g" style="left:374px;top:569px;width:85px;height:41px;background:#1f1f1f"></div><div class="g" style="left:461px;top:569px;width:85px;height:41px;background:#1f1f1f"></div><div class="g" style="left:548px;top:569px;width:85px;height:41px;background:#1f1f1f"></div><div class="g" style="left:635px;top:569px;width:85px;height:41px;background:#1f1f1f"></div><div class="g" style="left:722px;top:569px;width:85px;height:41px;background:#1f1f1f"></div><div class="g" style="left:809px;top:569px;width:85px;height:41px;background:#1f1f1f"></div><div class="g" style="left:896px;top:569px;width:85px;height:41px;background:#1f1f1f"></div><div class="g" style="left:983px;top:569px;width:85px;height:41px;background:#1f1f1f"></div><div class="g" style="left:1070px;top:569px;width:85px;height:41px;background:#141414"></div><div class="g" style="left:1157px;top:569px;width:85px;height:41px;background:#141414"></div><div class="g" style="left:1244px;top:569px;width:85px;height:41px;background:#141414"></div><div class="g" style="left:1331px;top:569px;width:85px;height:41px;background:#141414"></div><div class="g" style="left:1419px;top:569px;width:86px;height:41px;background:#141414"></div><div class="g" style="left:1507px;top:569px;width:86px;height:41px;background:#141414"></div><div class="g" style="left:1595px;top:569px;width:86px;height:41px;background:#141414"></div><div class="g" style="left:1683px;top:569px;width:86px;height:41px;background:#141414"></div><div class="g" style="left:287px;top:612px;width:85px;height:41px;background:#131313"></div><div class="g" style="left:374px;top:612px;width:85px;height:41px;background:#131313"></div><div class="g" style="left:461px;top:612px;width:85px;height:41px;background:#131313"></div><div class="g" style="left:548px;top:612px;width:85px;height:41px;background:#131313"></div><div class="g" style="left:635px;top:612px;width:85px;height:41px;background:#131313"></div><div class="g" style="left:722px;top:612px;width:85px;height:41px;background:#131313"></div><div class="g" style="left:809px;top:612px;width:85px;height:41px;background:#131313"></div><div class="g" style="left:896px;top:612px;width:85px;height:41px;background:#131313"></div><div class="g" style="left:983px;top:612px;width:85px;height:41px;background:#131313"></div><div class="g" style="left:1070px;top:612px;width:85px;height:41px;background:#000000"></div><div class="g" style="left:1157px;top:612px;width:85px;height:41px;background:#000000"></div><div class="g" style="left:1244px;top:612px;width:85px;height:41px;background:#000000"></div><div class="g" style="left:1331px;top:612px;width:85px;height:41px;background:#000000"></div><div class="g" style="left:1419px;top:612px;width:86px;height:41px;background:#000000"></div><div class="g" style="left:1507px;top:612px;width:86px;height:41px;background:#000000"></div><div class="g" style="left:1595px;top:612px;width:86px;height:41px;background:#000000"></div><div class="g" style="left:1683px;top:612px;width:86px;height:41px;background:#000000"></div><div class="g" style="left:287px;top:655px;width:85px;height:41px;background:#c4c4c4"></div><div class="g" style="left:374px;top:655px;width:85px;height:41px;background:#1f1f1f"></div><div class="g" style="left:461px;top:655px;width:85px;height:41px;background:#1f1f1f"></div><div class="g" style="left:548px;top:655px;width:85px;height:41px;background:#1f1f1f"></div><div class="g" style="left:635px;top:655px;width:85px;height:41px;background:#1f1f1f"></div><div class="g" style="left:722px;top:655px;width:85px;height:41px;background:#1f1f1f"></div><div class="g" style="left:809px;top:655px;width:85px;height:41px;background:#1f1f1f"></div><div class="g" style="left:896px;top:655px;width:85px;height:41px;background:#1f1f1f"></div><div class="g" style="left:983px;top:655px;width:85px;height:41px;background:#1f1f1f"></div><div class="g" style="left:1070px;top:655px;width:85px;height:41px;background:#141414"></div><div class="g" style="left:1157px;top:655px;width:85px;height:41px;background:#141414"></div><div class="g" style="left:1244px;top:655px;width:85px;height:41px;background:#141414"></div><div class="g" style="left:1331px;top:655px;width:85px;height:41px;background:#141414"></div><div class="g" style="left:1419px;top:655px;width:86px;height:41px;background:#141414"></div><div class="g" style="left:1507px;top:655px;width:86px;height:41px;background:#141414"></div><div class="g" style="left:1595px;top:655px;width:86px;height:41px;background:#141414"></div><div class="g" style="left:1683px;top:655px;width:86px;height:41px;background:#141414"></div><div class="g" style="left:287px;top:698px;width:85px;height:41px;background:#c4c4c4"></div><div class="g" style="left:374px;top:698px;width:85px;height:41px;background:#1f1f1f"></div><div class="g" style="left:461px;top:698px;width:85px;height:41px;background:#1f1f1f"></div><div class="g" style="left:548px;top:698px;width:85px;height:41px;background:#1f1f1f"></div><div class="g" style="left:635px;top:698px;width:85px;height:41px;background:#1f1f1f"></div><div class="g" style="left:722px;top:698px;width:85px;height:41px;background:#1f1f1f"></div><div class="g" style="left:809px;top:698px;width:85px;height:41px;background:#1f1f1f"></div><div class="g" style="left:896px;top:698px;width:85px;height:41px;background:#1f1f1f"></div><div class="g" style="left:983px;top:698px;width:85px;height:41px;background:#1f1f1f"></div><div class="g" style="left:1070px;top:698px;width:85px;height:41px;background:#141414"></div><div class="g" style="left:1157px;top:698px;width:85px;height:41px;background:#141414"></div><div class="g" style="left:1244px;top:698px;width:85px;height:41px;background:#141414"></div><div class="g" style="left:1331px;top:698px;width:85px;height:41px;background:#141414"></div><div class="g" style="left:1419px;top:698px;width:86px;height:41px;background:#141414"></div><div class="g" style="left:1507px;top:698px;width:86px;height:41px;background:#141414"></div><div class="g" style="left:1595px;top:698px;width:86px;height:41px;background:#141414"></div><div class="g" style="left:1683px;top:698px;width:86px;height:41px;background:#141414"></div><div class="g" style="left:287px;top:741px;width:85px;height:41px;background:#131313"></div><div class="g" style="left:374px;top:741px;width:85px;height:41px;background:#131313"></div><div class="g" style="left:461px;top:741px;width:85px;height:41px;background:#131313"></div><div class="g" style="left:548px;top:741px;width:85px;height:41px;background:#131313"></div><div class="g" style="left:635px;top:741px;width:85px;height:41px;background:#131313"></div><div class="g" style="left:722px;top:741px;width:85px;height:41px;background:#131313"></div><div class="g" style="left:809px;top:741px;width:85px;height:41px;background:#131313"></div><div class="g" style="left:896px;top:741px;width:85px;height:41px;background:#131313"></div><div class="g" style="left:983px;top:741px;width:85px;height:41px;background:#131313"></div><div class="g" style="left:1070px;top:741px;width:85px;height:41px;background:#000000"></div><div class="g" style="left:1157px;top:741px;width:85px;height:41px;background:#000000"></div><div class="g" style="left:1244px;top:741px;width:85px;height:41px;background:#000000"></div><div class="g" style="left:1331px;top:741px;width:85px;height:41px;background:#000000"></div><div class="g" style="left:1419px;top:741px;width:86px;height:41px;background:#000000"></div><div class="g" style="left:1507px;top:741px;width:86px;height:41px;background:#000000"></div><div class="g" style="left:1595px;top:741px;width:86px;height:41px;background:#000000"></div><div class="g" style="left:1683px;top:741px;width:86px;height:41px;background:#000000"></div><div class="g" style="left:287px;top:784px;width:85px;height:41px;background:#c4c4c4"></div><div class="g" style="left:374px;top:784px;width:85px;height:41px;background:#1f1f1f"></div><div class="g" style="left:461px;top:784px;width:85px;height:41px;background:#1f1f1f"></div><div class="g" style="left:548px;top:784px;width:85px;height:41px;background:#1f1f1f"></div><div class="g" style="left:635px;top:784px;width:85px;height:41px;background:#1f1f1f"></div><div class="g" style="left:722px;top:784px;width:85px;height:41px;background:#1f1f1f"></div><div class="g" style="left:809px;top:784px;width:85px;height:41px;background:#1f1f1f"></div><div class="g" style="left:896px;top:784px;width:85px;height:41px;background:#1f1f1f"></div><div class="g" style="left:983px;top:784px;width:85px;height:41px;background:#1f1f1f"></div><div class="g" style="left:1070px;top:784px;width:85px;height:41px;background:#141414"></div><div class="g" style="left:1157px;top:784px;width:85px;height:41px;background:#141414"></div><div class="g" style="left:1244px;top:784px;width:85px;height:41px;background:#141414"></div><div class="g" style="left:1331px;top:784px;width:85px;height:41px;background:#141414"></div><div class="g" style="left:1419px;top:784px;width:86px;height:41px;background:#141414"></div><div class="g" style="left:1507px;top:784px;width:86px;height:41px;background:#141414"></div><div class="g" style="left:1595px;top:784px;width:86px;height:41px;background:#141414"></div><div class="g" style="left:1683px;top:784px;width:86px;height:41px;background:#141414"></div><div class="g" style="left:287px;top:827px;width:85px;height:41px;background:#131313"></div><div class="g" style="left:374px;top:827px;width:85px;height:41px;background:#131313"></div><div class="g" style="left:461px;top:827px;width:85px;height:41px;background:#131313"></div><div class="g" style="left:548px;top:827px;width:85px;height:41px;background:#131313"></div><div class="g" style="left:635px;top:827px;width:85px;height:41px;background:#131313"></div><div class="g" style="left:722px;top:827px;width:85px;height:41px;background:#131313"></div><div class="g" style="left:809px;top:827px;width:85px;height:41px;background:#131313"></div><div class="g" style="left:896px;top:827px;width:85px;height:41px;background:#131313"></div><div class="g" style="left:983px;top:827px;width:85px;height:41px;background:#131313"></div><div class="g" style="left:1070px;top:827px;width:85px;height:41px;background:#000000"></div><div class="g" style="left:1157px;top:827px;width:85px;height:41px;background:#000000"></div><div class="g" style="left:1244px;top:827px;width:85px;height:41px;background:#000000"></div><div class="g" style="left:1331px;top:827px;width:85px;height:41px;background:#000000"></div><div class="g" style="left:1419px;top:827px;width:86px;height:41px;background:#000000"></div><div class="g" style="left:1507px;top:827px;width:86px;height:41px;background:#000000"></div><div class="g" style="left:1595px;top:827px;width:86px;height:41px;background:#000000"></div><div class="g" style="left:1683px;top:827px;width:86px;height:41px;background:#000000"></div><div class="g" style="left:287px;top:870px;width:85px;height:41px;background:#c4c4c4"></div><div class="g" style="left:374px;top:870px;width:85px;height:41px;background:#1f1f1f"></div><div class="g" style="left:461px;top:870px;width:85px;height:41px;background:#1f1f1f"></div><div class="g" style="left:548px;top:870px;width:85px;height:41px;background:#1f1f1f"></div><div class="g" style="left:635px;top:870px;width:85px;height:41px;background:#1f1f1f"></div><div class="g" style="left:722px;top:870px;width:85px;height:41px;background:#1f1f1f"></div><div class="g" style="left:809px;top:870px;width:85px;height:41px;background:#1f1f1f"></div><div class="g" style="left:896px;top:870px;width:85px;height:41px;background:#1f1f1f"></div><div class="g" style="left:983px;top:870px;width:85px;height:41px;background:#1f1f1f"></div><div class="g" style="left:1070px;top:870px;width:85px;height:41px;background:#141414"></div><div class="g" style="left:1157px;top:870px;width:85px;height:41px;background:#141414"></div><div class="g" style="left:1244px;top:870px;width:85px;height:41px;background:#141414"></div><div class="g" style="left:1331px;top:870px;width:85px;height:41px;background:#141414"></div><div class="g" style="left:1419px;top:870px;width:86px;height:41px;background:#141414"></div><div class="g" style="left:1507px;top:870px;width:86px;height:41px;background:#141414"></div><div class="g" style="left:1595px;top:870px;width:86px;height:41px;background:#141414"></div><div class="g" style="left:1683px;top:870px;width:86px;height:41px;background:#141414"></div>
<div class="t" style="top:192.58px;font-size:24.71px;line-height:24.71px;color:#1e1e1e;font-weight:bold;left:-840.00px;width:1200px;text-align:right;transform:scaleX(0.9000);transform-origin:right center;-webkit-text-stroke:0.3px #1e1e1e;">E5</div>
<div class="t" style="top:277.08px;font-size:24.71px;line-height:24.71px;color:#1e1e1e;font-weight:bold;left:-840.00px;width:1200px;text-align:right;transform:scaleX(0.9000);transform-origin:right center;-webkit-text-stroke:0.3px #1e1e1e;">D5</div>
<div class="t" style="top:363.08px;font-size:24.71px;line-height:24.71px;color:#1e1e1e;font-weight:bold;left:-840.00px;width:1200px;text-align:right;transform:scaleX(0.9000);transform-origin:right center;-webkit-text-stroke:0.3px #1e1e1e;">C5</div>
<div class="t" style="top:406.08px;font-size:24.71px;line-height:24.71px;color:#1e1e1e;font-weight:bold;left:-840.00px;width:1200px;text-align:right;transform:scaleX(0.9000);transform-origin:right center;-webkit-text-stroke:0.3px #1e1e1e;">B4</div>
<div class="t" style="top:492.08px;font-size:24.71px;line-height:24.71px;color:#1e1e1e;font-weight:bold;left:-840.00px;width:1200px;text-align:right;transform:scaleX(0.9000);transform-origin:right center;-webkit-text-stroke:0.3px #1e1e1e;">A4</div>
<div class="t" style="top:578.08px;font-size:24.71px;line-height:24.71px;color:#1e1e1e;font-weight:bold;left:-840.00px;width:1200px;text-align:right;transform:scaleX(0.9000);transform-origin:right center;-webkit-text-stroke:0.3px #1e1e1e;">G4</div>
<div class="t" style="top:664.08px;font-size:24.71px;line-height:24.71px;color:#1e1e1e;font-weight:bold;left:-840.00px;width:1200px;text-align:right;transform:scaleX(0.9000);transform-origin:right center;-webkit-text-stroke:0.3px #1e1e1e;">F4</div>
<div class="t" style="top:707.08px;font-size:24.71px;line-height:24.71px;color:#1e1e1e;font-weight:bold;left:-840.00px;width:1200px;text-align:right;transform:scaleX(0.9000);transform-origin:right center;-webkit-text-stroke:0.3px #1e1e1e;">E4</div>
<div class="t" style="top:793.08px;font-size:24.71px;line-height:24.71px;color:#1e1e1e;font-weight:bold;left:-840.00px;width:1200px;text-align:right;transform:scaleX(0.9000);transform-origin:right center;-webkit-text-stroke:0.3px #1e1e1e;">D4</div>
<div class="t" style="top:879.08px;font-size:24.71px;line-height:24.71px;color:#1e1e1e;font-weight:bold;left:-840.00px;width:1200px;text-align:right;transform:scaleX(0.9000);transform-origin:right center;-webkit-text-stroke:0.3px #1e1e1e;">C4</div>
<div class="g" style="left:722px;top:184px;width:85px;height:40px;background:#739696"></div>
<div class="g" style="left:809px;top:184px;width:85px;height:40px;background:#739696"></div>
<div class="g" style="left:896px;top:184px;width:85px;height:40px;background:#739696"></div>
<div class="g" style="left:983px;top:184px;width:85px;height:40px;background:#739696"></div>
<div class="t" style="top:188.33px;font-size:31.98px;line-height:31.98px;color:#ffffff;font-weight:bold;left:164.50px;width:1200px;text-align:center;transform:scaleX(0.9400);transform-origin:center center;-webkit-text-stroke:0.3px #ffffff;">76</div>
<div class="g" style="left:374px;top:268px;width:85px;height:41px;background:#967595"></div>
<div class="g" style="left:461px;top:268px;width:85px;height:41px;background:#967595"></div>
<div class="t" style="top:272.83px;font-size:31.98px;line-height:31.98px;color:#ffffff;font-weight:bold;left:-183.50px;width:1200px;text-align:center;transform:scaleX(0.9400);transform-origin:center center;-webkit-text-stroke:0.3px #ffffff;">70</div>
<div class="g" style="left:1419px;top:268px;width:86px;height:41px;background:#ae89b0"></div>
<div class="g" style="left:1507px;top:268px;width:86px;height:41px;background:#ae89b0"></div>
<div class="g" style="left:1595px;top:268px;width:86px;height:41px;background:#ae89b0"></div>
<div class="t" style="top:272.83px;font-size:31.98px;line-height:31.98px;color:#ffffff;font-weight:bold;left:862.00px;width:1200px;text-align:center;transform:scaleX(0.9400);transform-origin:center center;-webkit-text-stroke:0.3px #ffffff;">84</div>
<div class="g" style="left:722px;top:354px;width:85px;height:41px;background:#739696"></div>
<div class="g" style="left:809px;top:354px;width:85px;height:41px;background:#739696"></div>
<div class="g" style="left:896px;top:354px;width:85px;height:41px;background:#739696"></div>
<div class="g" style="left:983px;top:354px;width:85px;height:41px;background:#739696"></div>
<div class="t" style="top:358.83px;font-size:31.98px;line-height:31.98px;color:#ffffff;font-weight:bold;left:164.50px;width:1200px;text-align:center;transform:scaleX(0.9400);transform-origin:center center;-webkit-text-stroke:0.3px #ffffff;">72</div>
<div class="g" style="left:374px;top:397px;width:85px;height:41px;background:#967595"></div>
<div class="g" style="left:461px;top:397px;width:85px;height:41px;background:#967595"></div>
<div class="g" style="left:548px;top:397px;width:85px;height:41px;background:#967595"></div>
<div class="t" style="top:401.83px;font-size:31.98px;line-height:31.98px;color:#ffffff;font-weight:bold;left:-183.50px;width:1200px;text-align:center;transform:scaleX(0.9400);transform-origin:center center;-webkit-text-stroke:0.3px #ffffff;">70</div>
<div class="g" style="left:1507px;top:397px;width:86px;height:41px;background:#ae89b0"></div>
<div class="g" style="left:1595px;top:397px;width:86px;height:41px;background:#ae89b0"></div>
<div class="g" style="left:1683px;top:397px;width:86px;height:41px;background:#ae89b0"></div>
<div class="t" style="top:401.83px;font-size:31.98px;line-height:31.98px;color:#ffffff;font-weight:bold;left:950.00px;width:1200px;text-align:center;transform:scaleX(0.9400);transform-origin:center center;-webkit-text-stroke:0.3px #ffffff;">74</div>
<div class="g" style="left:1419px;top:440px;width:86px;height:41px;background:#ae89b0"></div>
<div class="g" style="left:1507px;top:440px;width:86px;height:41px;background:#ae89b0"></div>
<div class="t" style="top:444.83px;font-size:31.98px;line-height:31.98px;color:#ffffff;font-weight:bold;left:862.00px;width:1200px;text-align:center;transform:scaleX(0.9400);transform-origin:center center;-webkit-text-stroke:0.3px #ffffff;">97</div>
<div class="g" style="left:722px;top:569px;width:85px;height:41px;background:#739696"></div>
<div class="g" style="left:809px;top:569px;width:85px;height:41px;background:#739696"></div>
<div class="t" style="top:573.83px;font-size:31.98px;line-height:31.98px;color:#ffffff;font-weight:bold;left:164.50px;width:1200px;text-align:center;transform:scaleX(0.9400);transform-origin:center center;-webkit-text-stroke:0.3px #ffffff;">62</div>
<div class="g" style="left:1070px;top:569px;width:85px;height:41px;background:#ae89b0"></div>
<div class="g" style="left:1157px;top:569px;width:85px;height:41px;background:#ae89b0"></div>
<div class="g" style="left:1244px;top:569px;width:85px;height:41px;background:#ae89b0"></div>
<div class="t" style="top:573.83px;font-size:31.98px;line-height:31.98px;color:#ffffff;font-weight:bold;left:512.50px;width:1200px;text-align:center;transform:scaleX(0.9400);transform-origin:center center;-webkit-text-stroke:0.3px #ffffff;">66</div>
<div class="g" style="left:1419px;top:569px;width:86px;height:41px;background:#ae89b0"></div>
<div class="g" style="left:1507px;top:569px;width:86px;height:41px;background:#ae89b0"></div>
<div class="t" style="top:573.83px;font-size:31.98px;line-height:31.98px;color:#ffffff;font-weight:bold;left:862.00px;width:1200px;text-align:center;transform:scaleX(0.9400);transform-origin:center center;-webkit-text-stroke:0.3px #ffffff;">73</div>
<div class="g" style="left:374px;top:784px;width:85px;height:41px;background:#967595"></div>
<div class="g" style="left:461px;top:784px;width:85px;height:41px;background:#967595"></div>
<div class="g" style="left:548px;top:784px;width:85px;height:41px;background:#967595"></div>
<div class="t" style="top:788.83px;font-size:31.98px;line-height:31.98px;color:#ffffff;font-weight:bold;left:-183.50px;width:1200px;text-align:center;transform:scaleX(0.9400);transform-origin:center center;-webkit-text-stroke:0.3px #ffffff;">61</div>
<div class="g" style="left:1070px;top:784px;width:85px;height:41px;background:#ae89b0"></div>
<div class="g" style="left:1157px;top:784px;width:85px;height:41px;background:#ae89b0"></div>
<div class="g" style="left:1244px;top:784px;width:85px;height:41px;background:#ae89b0"></div>
<div class="t" style="top:788.83px;font-size:31.98px;line-height:31.98px;color:#ffffff;font-weight:bold;left:512.50px;width:1200px;text-align:center;transform:scaleX(0.9400);transform-origin:center center;-webkit-text-stroke:0.3px #ffffff;">61</div>
<svg style="position:absolute;left:380px;top:140px" width="1380" height="40" viewBox="380 140 1380 40"><rect x="405" y="148" width="21" height="24" rx="2.5" fill="#5a3a10"/><rect x="406.3" y="149.3" width="18.4" height="21.4" rx="1.6" fill="#eea812"/><polygon points="418.4,156.9 423.4,151.5 423.4,168.0 418.4,163.8" fill="#ffef8a"/><polygon points="409.0,169.6 423.0,169.6 421.0,165.3 413.8,166.2" fill="#f6cf5a"/><polygon points="407.2,151.2 410.0,150.6 412.6,153.2 412.0,155.6 409.6,157.5 408.6,161.5 407.2,162.5" fill="#fff8c8" opacity="0.85"/><rect x="410.0" y="159.3" width="11" height="1.4" fill="#f0d830"/><circle cx="415.5" cy="160.0" r="1.9" fill="none" stroke="#f0d830" stroke-width="1.1"/><rect x="492" y="148" width="21" height="24" rx="2.5" fill="#140606"/><rect x="493.3" y="149.3" width="18.4" height="21.4" rx="1.6" fill="#440b0b"/><polygon points="505.4,156.9 510.4,151.5 510.4,168.0 505.4,163.8" fill="#7a5252"/><polygon points="496.0,169.6 510.0,169.6 508.0,165.3 500.8,166.2" fill="#5a3030"/><polygon points="494.2,151.2 497.0,150.6 499.6,153.2 499.0,155.6 496.6,157.5 495.6,161.5 494.2,162.5" fill="#d0b0b0" opacity="0.85"/><rect x="497.0" y="159.3" width="11" height="1.4" fill="#e8a868"/><circle cx="502.5" cy="160.0" r="1.9" fill="none" stroke="#e8a868" stroke-width="1.1"/><rect x="577" y="148" width="21" height="24" rx="2.5" fill="#140606"/><rect x="578.3" y="149.3" width="18.4" height="21.4" rx="1.6" fill="#440b0b"/><polygon points="590.4,156.9 595.4,151.5 595.4,168.0 590.4,163.8" fill="#7a5252"/><polygon points="581.0,169.6 595.0,169.6 593.0,165.3 585.8,166.2" fill="#5a3030"/><polygon points="579.2,151.2 582.0,150.6 584.6,153.2 584.0,155.6 581.6,157.5 580.6,161.5 579.2,162.5" fill="#d0b0b0" opacity="0.85"/><rect x="582.0" y="159.3" width="11" height="1.4" fill="#e8a868"/><circle cx="587.5" cy="160.0" r="1.9" fill="none" stroke="#e8a868" stroke-width="1.1"/><rect x="663" y="148" width="21" height="24" rx="2.5" fill="#140606"/><rect x="664.3" y="149.3" width="18.4" height="21.4" rx="1.6" fill="#440b0b"/><polygon points="676.4,156.9 681.4,151.5 681.4,168.0 676.4,163.8" fill="#7a5252"/><polygon points="667.0,169.6 681.0,169.6 679.0,165.3 671.8,166.2" fill="#5a3030"/><polygon points="665.2,151.2 668.0,150.6 670.6,153.2 670.0,155.6 667.6,157.5 666.6,161.5 665.2,162.5" fill="#d0b0b0" opacity="0.85"/><rect x="668.0" y="159.3" width="11" height="1.4" fill="#e8a868"/><circle cx="673.5" cy="160.0" r="1.9" fill="none" stroke="#e8a868" stroke-width="1.1"/><rect x="749" y="148" width="21" height="24" rx="2.5" fill="#140606"/><rect x="750.3" y="149.3" width="18.4" height="21.4" rx="1.6" fill="#440b0b"/><polygon points="762.4,156.9 767.4,151.5 767.4,168.0 762.4,163.8" fill="#7a5252"/><polygon points="753.0,169.6 767.0,169.6 765.0,165.3 757.8,166.2" fill="#5a3030"/><polygon points="751.2,151.2 754.0,150.6 756.6,153.2 756.0,155.6 753.6,157.5 752.6,161.5 751.2,162.5" fill="#d0b0b0" opacity="0.85"/><rect x="754.0" y="159.3" width="11" height="1.4" fill="#e8a868"/><circle cx="759.5" cy="160.0" r="1.9" fill="none" stroke="#e8a868" stroke-width="1.1"/><rect x="836" y="148" width="21" height="24" rx="2.5" fill="#140606"/><rect x="837.3" y="149.3" width="18.4" height="21.4" rx="1.6" fill="#440b0b"/><polygon points="849.4,156.9 854.4,151.5 854.4,168.0 849.4,163.8" fill="#7a5252"/><polygon points="840.0,169.6 854.0,169.6 852.0,165.3 844.8,166.2" fill="#5a3030"/><polygon points="838.2,151.2 841.0,150.6 843.6,153.2 843.0,155.6 840.6,157.5 839.6,161.5 838.2,162.5" fill="#d0b0b0" opacity="0.85"/><rect x="841.0" y="159.3" width="11" height="1.4" fill="#e8a868"/><circle cx="846.5" cy="160.0" r="1.9" fill="none" stroke="#e8a868" stroke-width="1.1"/><rect x="923" y="148" width="21" height="24" rx="2.5" fill="#140606"/><rect x="924.3" y="149.3" width="18.4" height="21.4" rx="1.6" fill="#440b0b"/><polygon points="936.4,156.9 941.4,151.5 941.4,168.0 936.4,163.8" fill="#7a5252"/><polygon points="927.0,169.6 941.0,169.6 939.0,165.3 931.8,166.2" fill="#5a3030"/><polygon points="925.2,151.2 928.0,150.6 930.6,153.2 930.0,155.6 927.6,157.5 926.6,161.5 925.2,162.5" fill="#d0b0b0" opacity="0.85"/><rect x="928.0" y="159.3" width="11" height="1.4" fill="#e8a868"/><circle cx="933.5" cy="160.0" r="1.9" fill="none" stroke="#e8a868" stroke-width="1.1"/><rect x="1010" y="148" width="21" height="24" rx="2.5" fill="#140606"/><rect x="1011.3" y="149.3" width="18.4" height="21.4" rx="1.6" fill="#440b0b"/><polygon points="1023.4,156.9 1028.4,151.5 1028.4,168.0 1023.4,163.8" fill="#7a5252"/><polygon points="1014.0,169.6 1028.0,169.6 1026.0,165.3 1018.8,166.2" fill="#5a3030"/><polygon points="1012.2,151.2 1015.0,150.6 1017.6,153.2 1017.0,155.6 1014.6,157.5 1013.6,161.5 1012.2,162.5" fill="#d0b0b0" opacity="0.85"/><rect x="1015.0" y="159.3" width="11" height="1.4" fill="#e8a868"/><circle cx="1020.5" cy="160.0" r="1.9" fill="none" stroke="#e8a868" stroke-width="1.1"/><rect x="1098" y="148" width="21" height="24" rx="2.5" fill="#141008"/><rect x="1099.3" y="149.3" width="18.4" height="21.4" rx="1.6" fill="#3c2f16"/><polygon points="1111.4,156.9 1116.4,151.5 1116.4,168.0 1111.4,163.8" fill="#7a705e"/><polygon points="1102.0,169.6 1116.0,169.6 1114.0,165.3 1106.8,166.2" fill="#4c4130"/><polygon points="1100.2,151.2 1103.0,150.6 1105.6,153.2 1105.0,155.6 1102.6,157.5 1101.6,161.5 1100.2,162.5" fill="#cfc6ae" opacity="0.85"/><rect x="1103.0" y="159.3" width="11" height="1.4" fill="#b8e07a"/><circle cx="1108.5" cy="160.0" r="1.9" fill="none" stroke="#b8e07a" stroke-width="1.1"/><rect x="1186" y="148" width="21" height="24" rx="2.5" fill="#140606"/><rect x="1187.3" y="149.3" width="18.4" height="21.4" rx="1.6" fill="#440b0b"/><polygon points="1199.4,156.9 1204.4,151.5 1204.4,168.0 1199.4,163.8" fill="#7a5252"/><polygon points="1190.0,169.6 1204.0,169.6 1202.0,165.3 1194.8,166.2" fill="#5a3030"/><polygon points="1188.2,151.2 1191.0,150.6 1193.6,153.2 1193.0,155.6 1190.6,157.5 1189.6,161.5 1188.2,162.5" fill="#d0b0b0" opacity="0.85"/><rect x="1191.0" y="159.3" width="11" height="1.4" fill="#e8a868"/><circle cx="1196.5" cy="160.0" r="1.9" fill="none" stroke="#e8a868" stroke-width="1.1"/><rect x="1274" y="148" width="21" height="24" rx="2.5" fill="#140606"/><rect x="1275.3" y="149.3" width="18.4" height="21.4" rx="1.6" fill="#440b0b"/><polygon points="1287.4,156.9 1292.4,151.5 1292.4,168.0 1287.4,163.8" fill="#7a5252"/><polygon points="1278.0,169.6 1292.0,169.6 1290.0,165.3 1282.8,166.2" fill="#5a3030"/><polygon points="1276.2,151.2 1279.0,150.6 1281.6,153.2 1281.0,155.6 1278.6,157.5 1277.6,161.5 1276.2,162.5" fill="#d0b0b0" opacity="0.85"/><rect x="1279.0" y="159.3" width="11" height="1.4" fill="#e8a868"/><circle cx="1284.5" cy="160.0" r="1.9" fill="none" stroke="#e8a868" stroke-width="1.1"/><rect x="1362" y="148" width="21" height="24" rx="2.5" fill="#140606"/><rect x="1363.3" y="149.3" width="18.4" height="21.4" rx="1.6" fill="#440b0b"/><polygon points="1375.4,156.9 1380.4,151.5 1380.4,168.0 1375.4,163.8" fill="#7a5252"/><polygon points="1366.0,169.6 1380.0,169.6 1378.0,165.3 1370.8,166.2" fill="#5a3030"/><polygon points="1364.2,151.2 1367.0,150.6 1369.6,153.2 1369.0,155.6 1366.6,157.5 1365.6,161.5 1364.2,162.5" fill="#d0b0b0" opacity="0.85"/><rect x="1367.0" y="159.3" width="11" height="1.4" fill="#e8a868"/><circle cx="1372.5" cy="160.0" r="1.9" fill="none" stroke="#e8a868" stroke-width="1.1"/><rect x="1450" y="148" width="21" height="24" rx="2.5" fill="#140606"/><rect x="1451.3" y="149.3" width="18.4" height="21.4" rx="1.6" fill="#440b0b"/><polygon points="1463.4,156.9 1468.4,151.5 1468.4,168.0 1463.4,163.8" fill="#7a5252"/><polygon points="1454.0,169.6 1468.0,169.6 1466.0,165.3 1458.8,166.2" fill="#5a3030"/><polygon points="1452.2,151.2 1455.0,150.6 1457.6,153.2 1457.0,155.6 1454.6,157.5 1453.6,161.5 1452.2,162.5" fill="#d0b0b0" opacity="0.85"/><rect x="1455.0" y="159.3" width="11" height="1.4" fill="#e8a868"/><circle cx="1460.5" cy="160.0" r="1.9" fill="none" stroke="#e8a868" stroke-width="1.1"/><rect x="1538" y="148" width="21" height="24" rx="2.5" fill="#140606"/><rect x="1539.3" y="149.3" width="18.4" height="21.4" rx="1.6" fill="#440b0b"/><polygon points="1551.4,156.9 1556.4,151.5 1556.4,168.0 1551.4,163.8" fill="#7a5252"/><polygon points="1542.0,169.6 1556.0,169.6 1554.0,165.3 1546.8,166.2" fill="#5a3030"/><polygon points="1540.2,151.2 1543.0,150.6 1545.6,153.2 1545.0,155.6 1542.6,157.5 1541.6,161.5 1540.2,162.5" fill="#d0b0b0" opacity="0.85"/><rect x="1543.0" y="159.3" width="11" height="1.4" fill="#e8a868"/><circle cx="1548.5" cy="160.0" r="1.9" fill="none" stroke="#e8a868" stroke-width="1.1"/><rect x="1625" y="148" width="21" height="24" rx="2.5" fill="#140606"/><rect x="1626.3" y="149.3" width="18.4" height="21.4" rx="1.6" fill="#440b0b"/><polygon points="1638.4,156.9 1643.4,151.5 1643.4,168.0 1638.4,163.8" fill="#7a5252"/><polygon points="1629.0,169.6 1643.0,169.6 1641.0,165.3 1633.8,166.2" fill="#5a3030"/><polygon points="1627.2,151.2 1630.0,150.6 1632.6,153.2 1632.0,155.6 1629.6,157.5 1628.6,161.5 1627.2,162.5" fill="#d0b0b0" opacity="0.85"/><rect x="1630.0" y="159.3" width="11" height="1.4" fill="#e8a868"/><circle cx="1635.5" cy="160.0" r="1.9" fill="none" stroke="#e8a868" stroke-width="1.1"/><rect x="1714" y="148" width="21" height="24" rx="2.5" fill="#140606"/><rect x="1715.3" y="149.3" width="18.4" height="21.4" rx="1.6" fill="#440b0b"/><polygon points="1727.4,156.9 1732.4,151.5 1732.4,168.0 1727.4,163.8" fill="#7a5252"/><polygon points="1718.0,169.6 1732.0,169.6 1730.0,165.3 1722.8,166.2" fill="#5a3030"/><polygon points="1716.2,151.2 1719.0,150.6 1721.6,153.2 1721.0,155.6 1718.6,157.5 1717.6,161.5 1716.2,162.5" fill="#d0b0b0" opacity="0.85"/><rect x="1719.0" y="159.3" width="11" height="1.4" fill="#e8a868"/><circle cx="1724.5" cy="160.0" r="1.9" fill="none" stroke="#e8a868" stroke-width="1.1"/></svg>
<svg style="position:absolute;left:378px;top:148px" width="16" height="26" viewBox="378 148 16 26"><path d="M382,152.1 H389 V169.8 H386 V154.8 H382 Z" fill="#8c8c8c"/></svg>
<div class="b ba" style="left:1789px;top:186px;width:89px;height:81px"></div>
<div class="t" style="top:213.85px;font-size:26.16px;line-height:26.16px;color:#c2e2fc;font-weight:bold;left:1234.50px;width:1200px;text-align:center;transform:scaleX(0.8222);transform-origin:center center;-webkit-text-stroke:0.3px #c2e2fc;">EDIT</div>
<div class="lb" style="left:1787px;top:273px;width:94px;height:30px;background:#475a82;border-radius:2px 2px 7px 7px"></div>
<div class="t" style="top:276.74px;font-size:21.80px;line-height:21.80px;color:#fff;font-weight:normal;left:1234.00px;width:1200px;text-align:center;transform:scaleX(0.8715);transform-origin:center center;-webkit-text-stroke:0.55px #fff;">MODE</div>
<div class="b" style="left:1789px;top:326px;width:90px;height:81px"></div>
<div class="t" style="top:339.77px;font-size:26.02px;line-height:26.02px;color:#85858a;font-weight:bold;left:1235.20px;width:1200px;text-align:center;transform:scaleX(0.7945);transform-origin:center center;-webkit-text-stroke:0.3px #85858a;">KEY</div>
<div class="t" style="top:369.71px;font-size:25.15px;line-height:25.15px;color:#85858a;font-weight:bold;left:1235.20px;width:1200px;text-align:center;transform:scaleX(0.8117);transform-origin:center center;-webkit-text-stroke:0.3px #85858a;">VEL</div>
<div class="b" style="left:1789px;top:419px;width:90px;height:81px"></div>
<div class="cn" style="left:1801px;top:431px;border-color:#707070 transparent transparent #707070"></div>
<svg style="position:absolute;left:1810px;top:440px" width="50" height="32" viewBox="1810 440 50 32"><polygon points="1815.9,468.8 1851.3,468.8 1833.6,445" fill="#85858a"/></svg>
<div class="b" style="left:1789px;top:512px;width:90px;height:82px"></div>
<div class="cn" style="left:1801px;top:524px;border-color:#707070 transparent transparent #707070"></div>
<svg style="position:absolute;left:1810px;top:538px" width="50" height="32" viewBox="1810 538 50 32"><polygon points="1815.9,543 1851.3,543 1833.6,567.7" fill="#85858a"/></svg>
<div class="lb" style="left:1787px;top:600px;width:94px;height:30px;background:#475a82;border-radius:2px 2px 7px 7px"></div>
<div class="t" style="top:603.80px;font-size:22.67px;line-height:22.67px;color:#fff;font-weight:normal;left:1234.00px;width:1200px;text-align:center;transform:scaleX(0.8613);transform-origin:center center;-webkit-text-stroke:0.55px #fff;">PARAM</div>
<div class="lb" style="left:176px;top:940px;width:27px;height:85px;background:#475a82;border-radius:7px 2px 2px 7px"></div>
<div class="t" style="left:89.5px;top:970.2906976744187px;width:200px;height:24.418604651162795px;line-height:24.418604651162795px;font-size:24.42px;font-weight:normal;color:#fff;-webkit-text-stroke:0.55px #fff;text-align:center;transform:rotate(-90deg) scaleX(0.723);">BAR</div>
<div class="b" style="left:209px;top:942px;width:90px;height:81px"></div>
<div class="cn" style="left:221px;top:954px;border-color:#707070 transparent transparent #707070"></div>
<svg style="position:absolute;left:235px;top:960px" width="30" height="44" viewBox="235 960 30 44"><polygon points="239,982 261.3,963.75 261.3,1000" fill="#85858a"/></svg>
<svg style="position:absolute;left:305px;top:944px" width="255" height="74" viewBox="305 944 255 74"><rect x="310.0" y="949.5" width="21.3" height="25" rx="2.5" fill="#5a3a10"/><rect x="311.3" y="950.8" width="18.7" height="22.4" rx="1.6" fill="#eea812"/><polygon points="323.6,958.8 328.7,953.0 328.7,970.5 323.6,966.0" fill="#ffef8a"/><polygon points="314.0,972.1 328.3,972.1 326.2,967.5 318.9,968.5" fill="#f6cf5a"/><polygon points="312.2,952.7 315.0,952.1 317.6,954.7 317.0,957.1 314.6,959.0 313.6,963.0 312.2,964.0" fill="#fff8c8" opacity="0.85"/><rect x="315.1" y="961.3" width="11" height="1.4" fill="#f0d830"/><circle cx="320.6" cy="962.0" r="1.9" fill="none" stroke="#f0d830" stroke-width="1.1"/><rect x="310.0" y="987" width="21.3" height="25" rx="2.5" fill="#140606"/><rect x="311.3" y="988.3" width="18.7" height="22.4" rx="1.6" fill="#440b0b"/><polygon points="323.6,996.2 328.7,990.5 328.7,1008.0 323.6,1003.5" fill="#7a5252"/><polygon points="314.0,1009.6 328.3,1009.6 326.2,1005.0 318.9,1006.0" fill="#5a3030"/><polygon points="312.2,990.2 315.0,989.6 317.6,992.2 317.0,994.6 314.6,996.5 313.6,1000.5 312.2,1001.5" fill="#d0b0b0" opacity="0.85"/><rect x="315.1" y="998.8" width="11" height="1.4" fill="#e8a868"/><circle cx="320.6" cy="999.5" r="1.9" fill="none" stroke="#e8a868" stroke-width="1.1"/><rect x="341.2" y="949.5" width="21.3" height="25" rx="2.5" fill="#141008"/><rect x="342.5" y="950.8" width="18.7" height="22.4" rx="1.6" fill="#3c2f16"/><polygon points="354.8,958.8 359.9,953.0 359.9,970.5 354.8,966.0" fill="#7a705e"/><polygon points="345.2,972.1 359.5,972.1 357.4,967.5 350.1,968.5" fill="#4c4130"/><polygon points="343.4,952.7 346.2,952.1 348.8,954.7 348.2,957.1 345.8,959.0 344.8,963.0 343.4,964.0" fill="#cfc6ae" opacity="0.85"/><rect x="346.3" y="961.3" width="11" height="1.4" fill="#b8e07a"/><circle cx="351.8" cy="962.0" r="1.9" fill="none" stroke="#b8e07a" stroke-width="1.1"/><rect x="341.2" y="987" width="21.3" height="25" rx="2.5" fill="#140606"/><rect x="342.5" y="988.3" width="18.7" height="22.4" rx="1.6" fill="#440b0b"/><polygon points="354.8,996.2 359.9,990.5 359.9,1008.0 354.8,1003.5" fill="#7a5252"/><polygon points="345.2,1009.6 359.5,1009.6 357.4,1005.0 350.1,1006.0" fill="#5a3030"/><polygon points="343.4,990.2 346.2,989.6 348.8,992.2 348.2,994.6 345.8,996.5 344.8,1000.5 343.4,1001.5" fill="#d0b0b0" opacity="0.85"/><rect x="346.3" y="998.8" width="11" height="1.4" fill="#e8a868"/><circle cx="351.8" cy="999.5" r="1.9" fill="none" stroke="#e8a868" stroke-width="1.1"/><rect x="372.5" y="949.5" width="21.3" height="25" rx="2.5" fill="#141008"/><rect x="373.8" y="950.8" width="18.7" height="22.4" rx="1.6" fill="#3c2f16"/><polygon points="386.1,958.8 391.2,953.0 391.2,970.5 386.1,966.0" fill="#7a705e"/><polygon points="376.5,972.1 390.8,972.1 388.7,967.5 381.4,968.5" fill="#4c4130"/><polygon points="374.7,952.7 377.5,952.1 380.1,954.7 379.5,957.1 377.1,959.0 376.1,963.0 374.7,964.0" fill="#cfc6ae" opacity="0.85"/><rect x="377.6" y="961.3" width="11" height="1.4" fill="#b8e07a"/><circle cx="383.1" cy="962.0" r="1.9" fill="none" stroke="#b8e07a" stroke-width="1.1"/><rect x="372.5" y="987" width="21.3" height="25" rx="2.5" fill="#140606"/><rect x="373.8" y="988.3" width="18.7" height="22.4" rx="1.6" fill="#440b0b"/><polygon points="386.1,996.2 391.2,990.5 391.2,1008.0 386.1,1003.5" fill="#7a5252"/><polygon points="376.5,1009.6 390.8,1009.6 388.7,1005.0 381.4,1006.0" fill="#5a3030"/><polygon points="374.7,990.2 377.5,989.6 380.1,992.2 379.5,994.6 377.1,996.5 376.1,1000.5 374.7,1001.5" fill="#d0b0b0" opacity="0.85"/><rect x="377.6" y="998.8" width="11" height="1.4" fill="#e8a868"/><circle cx="383.1" cy="999.5" r="1.9" fill="none" stroke="#e8a868" stroke-width="1.1"/><rect x="403.8" y="949.5" width="21.3" height="25" rx="2.5" fill="#141008"/><rect x="405.1" y="950.8" width="18.7" height="22.4" rx="1.6" fill="#3c2f16"/><polygon points="417.4,958.8 422.5,953.0 422.5,970.5 417.4,966.0" fill="#7a705e"/><polygon points="407.8,972.1 422.1,972.1 420.0,967.5 412.7,968.5" fill="#4c4130"/><polygon points="406.0,952.7 408.8,952.1 411.4,954.7 410.8,957.1 408.4,959.0 407.4,963.0 406.0,964.0" fill="#cfc6ae" opacity="0.85"/><rect x="408.9" y="961.3" width="11" height="1.4" fill="#b8e07a"/><circle cx="414.4" cy="962.0" r="1.9" fill="none" stroke="#b8e07a" stroke-width="1.1"/><rect x="403.8" y="987" width="21.3" height="25" rx="2.5" fill="#3a0a06"/><rect x="405.1" y="988.3" width="18.7" height="22.4" rx="1.6" fill="#e02818"/><polygon points="417.4,996.2 422.5,990.5 422.5,1008.0 417.4,1003.5" fill="#ff8a70"/><polygon points="407.8,1009.6 422.1,1009.6 420.0,1005.0 412.7,1006.0" fill="#f06050"/><polygon points="406.0,990.2 408.8,989.6 411.4,992.2 410.8,994.6 408.4,996.5 407.4,1000.5 406.0,1001.5" fill="#ffd0c0" opacity="0.85"/><rect x="408.9" y="998.8" width="11" height="1.4" fill="#ffe070"/><circle cx="414.4" cy="999.5" r="1.9" fill="none" stroke="#ffe070" stroke-width="1.1"/><rect x="435.0" y="949.5" width="21.3" height="25" rx="2.5" fill="#141008"/><rect x="436.3" y="950.8" width="18.7" height="22.4" rx="1.6" fill="#3c2f16"/><polygon points="448.6,958.8 453.7,953.0 453.7,970.5 448.6,966.0" fill="#7a705e"/><polygon points="439.0,972.1 453.3,972.1 451.2,967.5 443.9,968.5" fill="#4c4130"/><polygon points="437.2,952.7 440.0,952.1 442.6,954.7 442.0,957.1 439.6,959.0 438.6,963.0 437.2,964.0" fill="#cfc6ae" opacity="0.85"/><rect x="440.1" y="961.3" width="11" height="1.4" fill="#b8e07a"/><circle cx="445.6" cy="962.0" r="1.9" fill="none" stroke="#b8e07a" stroke-width="1.1"/><rect x="435.0" y="987" width="21.3" height="25" rx="2.5" fill="#140606"/><rect x="436.3" y="988.3" width="18.7" height="22.4" rx="1.6" fill="#440b0b"/><polygon points="448.6,996.2 453.7,990.5 453.7,1008.0 448.6,1003.5" fill="#7a5252"/><polygon points="439.0,1009.6 453.3,1009.6 451.2,1005.0 443.9,1006.0" fill="#5a3030"/><polygon points="437.2,990.2 440.0,989.6 442.6,992.2 442.0,994.6 439.6,996.5 438.6,1000.5 437.2,1001.5" fill="#d0b0b0" opacity="0.85"/><rect x="440.1" y="998.8" width="11" height="1.4" fill="#e8a868"/><circle cx="445.6" cy="999.5" r="1.9" fill="none" stroke="#e8a868" stroke-width="1.1"/><rect x="466.2" y="949.5" width="21.3" height="25" rx="2.5" fill="#141008"/><rect x="467.5" y="950.8" width="18.7" height="22.4" rx="1.6" fill="#3c2f16"/><polygon points="479.8,958.8 484.9,953.0 484.9,970.5 479.8,966.0" fill="#7a705e"/><polygon points="470.2,972.1 484.5,972.1 482.4,967.5 475.1,968.5" fill="#4c4130"/><polygon points="468.4,952.7 471.2,952.1 473.8,954.7 473.2,957.1 470.8,959.0 469.8,963.0 468.4,964.0" fill="#cfc6ae" opacity="0.85"/><rect x="471.3" y="961.3" width="11" height="1.4" fill="#b8e07a"/><circle cx="476.8" cy="962.0" r="1.9" fill="none" stroke="#b8e07a" stroke-width="1.1"/><rect x="466.2" y="987" width="21.3" height="25" rx="2.5" fill="#140606"/><rect x="467.5" y="988.3" width="18.7" height="22.4" rx="1.6" fill="#440b0b"/><polygon points="479.8,996.2 484.9,990.5 484.9,1008.0 479.8,1003.5" fill="#7a5252"/><polygon points="470.2,1009.6 484.5,1009.6 482.4,1005.0 475.1,1006.0" fill="#5a3030"/><polygon points="468.4,990.2 471.2,989.6 473.8,992.2 473.2,994.6 470.8,996.5 469.8,1000.5 468.4,1001.5" fill="#d0b0b0" opacity="0.85"/><rect x="471.3" y="998.8" width="11" height="1.4" fill="#e8a868"/><circle cx="476.8" cy="999.5" r="1.9" fill="none" stroke="#e8a868" stroke-width="1.1"/><rect x="497.5" y="949.5" width="21.3" height="25" rx="2.5" fill="#141008"/><rect x="498.8" y="950.8" width="18.7" height="22.4" rx="1.6" fill="#3c2f16"/><polygon points="511.1,958.8 516.2,953.0 516.2,970.5 511.1,966.0" fill="#7a705e"/><polygon points="501.5,972.1 515.8,972.1 513.7,967.5 506.4,968.5" fill="#4c4130"/><polygon points="499.7,952.7 502.5,952.1 505.1,954.7 504.5,957.1 502.1,959.0 501.1,963.0 499.7,964.0" fill="#cfc6ae" opacity="0.85"/><rect x="502.6" y="961.3" width="11" height="1.4" fill="#b8e07a"/><circle cx="508.1" cy="962.0" r="1.9" fill="none" stroke="#b8e07a" stroke-width="1.1"/><rect x="497.5" y="987" width="21.3" height="25" rx="2.5" fill="#140606"/><rect x="498.8" y="988.3" width="18.7" height="22.4" rx="1.6" fill="#440b0b"/><polygon points="511.1,996.2 516.2,990.5 516.2,1008.0 511.1,1003.5" fill="#7a5252"/><polygon points="501.5,1009.6 515.8,1009.6 513.7,1005.0 506.4,1006.0" fill="#5a3030"/><polygon points="499.7,990.2 502.5,989.6 505.1,992.2 504.5,994.6 502.1,996.5 501.1,1000.5 499.7,1001.5" fill="#d0b0b0" opacity="0.85"/><rect x="502.6" y="998.8" width="11" height="1.4" fill="#e8a868"/><circle cx="508.1" cy="999.5" r="1.9" fill="none" stroke="#e8a868" stroke-width="1.1"/><rect x="528.8" y="949.5" width="21.3" height="25" rx="2.5" fill="#141008"/><rect x="530.1" y="950.8" width="18.7" height="22.4" rx="1.6" fill="#3c2f16"/><polygon points="542.4,958.8 547.5,953.0 547.5,970.5 542.4,966.0" fill="#7a705e"/><polygon points="532.8,972.1 547.1,972.1 545.0,967.5 537.7,968.5" fill="#4c4130"/><polygon points="531.0,952.7 533.8,952.1 536.4,954.7 535.8,957.1 533.4,959.0 532.4,963.0 531.0,964.0" fill="#cfc6ae" opacity="0.85"/><rect x="533.9" y="961.3" width="11" height="1.4" fill="#b8e07a"/><circle cx="539.4" cy="962.0" r="1.9" fill="none" stroke="#b8e07a" stroke-width="1.1"/><rect x="528.8" y="987" width="21.3" height="25" rx="2.5" fill="#140606"/><rect x="530.1" y="988.3" width="18.7" height="22.4" rx="1.6" fill="#440b0b"/><polygon points="542.4,996.2 547.5,990.5 547.5,1008.0 542.4,1003.5" fill="#7a5252"/><polygon points="532.8,1009.6 547.1,1009.6 545.0,1005.0 537.7,1006.0" fill="#5a3030"/><polygon points="531.0,990.2 533.8,989.6 536.4,992.2 535.8,994.6 533.4,996.5 532.4,1000.5 531.0,1001.5" fill="#d0b0b0" opacity="0.85"/><rect x="533.9" y="998.8" width="11" height="1.4" fill="#e8a868"/><circle cx="539.4" cy="999.5" r="1.9" fill="none" stroke="#e8a868" stroke-width="1.1"/></svg>
<div class="b" style="left:560px;top:942px;width:90px;height:81px"></div>
<div class="cn" style="left:572px;top:954px;border-color:#707070 transparent transparent #707070"></div>
<svg style="position:absolute;left:594px;top:960px" width="30" height="44" viewBox="594 960 30 44"><polygon points="598.4,963.75 619.9,982 598.4,1000" fill="#85858a"/></svg>
<div class="b" style="left:662px;top:942px;width:202px;height:81px"></div>
<div class="t" style="top:956.35px;font-size:26.16px;line-height:26.16px;color:#85858a;font-weight:bold;left:163.70px;width:1200px;text-align:center;transform:scaleX(0.8454);transform-origin:center center;-webkit-text-stroke:0.3px #85858a;">LINK</div>
<div class="t" style="top:984.35px;font-size:26.16px;line-height:26.16px;color:#85858a;font-weight:bold;left:163.20px;width:1200px;text-align:center;transform:scaleX(0.8741);transform-origin:center center;-webkit-text-stroke:0.3px #85858a;">EDIT/PLAY-POS</div>
<div class="lb" style="left:891px;top:940px;width:27px;height:85px;background:#475a82;border-radius:7px 2px 2px 7px"></div>
<div class="t" style="left:804.5px;top:970.2906976744187px;width:200px;height:24.418604651162795px;line-height:24.418604651162795px;font-size:24.42px;font-weight:normal;color:#fff;-webkit-text-stroke:0.55px #fff;text-align:center;transform:rotate(-90deg) scaleX(0.765);">SHIFT</div>
<div class="b" style="left:925px;top:942px;width:90px;height:81px"></div>
<div class="cn" style="left:937px;top:954px;border-color:#707070 transparent transparent #707070"></div>
<svg style="position:absolute;left:950px;top:960px" width="30" height="44" viewBox="950 960 30 44"><polygon points="954.2,981.7 976.4,963.3 976.4,1000.2" fill="#85858a"/></svg>
<div class="b" style="left:1024px;top:942px;width:110px;height:81px"></div>
<div class="g" style="left:1032px;top:950px;width:94px;height:65px;border-radius:3px;background:radial-gradient(ellipse at 50% 50%, #3cf7c2 0%, #2ee3b0 50%, #1bc996 100%);"></div>
<div class="t" style="top:961.20px;font-size:42.88px;line-height:42.88px;color:#0c3b2c;font-weight:bold;left:479.90px;width:1200px;text-align:center;transform:scaleX(0.8641);transform-origin:center center;-webkit-text-stroke:0.3px #0c3b2c;">0</div>
<div class="b" style="left:1143px;top:942px;width:90px;height:81px"></div>
<div class="cn" style="left:1155px;top:954px;border-color:#707070 transparent transparent #707070"></div>
<svg style="position:absolute;left:1180px;top:960px" width="30" height="44" viewBox="1180 960 30 44"><polygon points="1183,963.3 1205.2,981.7 1183,1000.2" fill="#85858a"/></svg>
<div class="b bd" style="left:1246px;top:942px;width:203px;height:81px"></div>
<div class="cn" style="left:1258px;top:954px;border-color:#3e3e3e transparent transparent #3e3e3e"></div>
<div class="t" style="top:966.03px;font-size:35.76px;line-height:35.76px;color:#404042;font-weight:bold;left:747.30px;width:1200px;text-align:center;transform:scaleX(0.8664);transform-origin:center center;-webkit-text-stroke:0.3px #404042;">RANDOM</div>
<div class="b bd" style="left:1461px;top:942px;width:203px;height:81px"></div>
<div class="t" style="top:966.03px;font-size:35.76px;line-height:35.76px;color:#404042;font-weight:bold;left:962.00px;width:1200px;text-align:center;transform:scaleX(0.8310);transform-origin:center center;-webkit-text-stroke:0.3px #404042;">REVERSE</div>
<div class="b" style="left:1676px;top:942px;width:203px;height:81px"></div>
<div class="t" style="top:966.03px;font-size:35.76px;line-height:35.76px;color:#85858a;font-weight:bold;left:1176.50px;width:1200px;text-align:center;transform:scaleX(0.8679);transform-origin:center center;-webkit-text-stroke:0.3px #85858a;">INVERT</div>
<div class="b" style="left:151px;top:1070px;width:116px;height:82px"></div>
<div class="t" style="top:1093.65px;font-size:35.61px;line-height:35.61px;color:#85858a;font-weight:bold;left:-391.00px;width:1200px;text-align:center;transform:scaleX(0.8965);transform-origin:center center;-webkit-text-stroke:0.3px #85858a;">VT01</div>
<div class="lb" style="left:151px;top:1158px;width:116px;height:32px;background:#7a8cbc;border-radius:3px 3px 6px 6px"></div>
<div class="t" style="top:1162.03px;font-size:25.00px;line-height:25.00px;color:#141418;font-weight:normal;left:-391.00px;width:1200px;text-align:center;transform:scaleX(0.8788);transform-origin:center center;-webkit-text-stroke:0.55px #141418;">Gran..) PH</div>
<div class="b" style="left:280px;top:1070px;width:116px;height:82px"></div>
<div class="t" style="top:1093.65px;font-size:35.61px;line-height:35.61px;color:#85858a;font-weight:bold;left:-262.00px;width:1200px;text-align:center;transform:scaleX(0.8965);transform-origin:center center;-webkit-text-stroke:0.3px #85858a;">VT02</div>
<div class="lb" style="left:280px;top:1158px;width:116px;height:32px;background:#7a8cbc;border-radius:3px 3px 6px 6px"></div>
<div class="t" style="top:1162.03px;font-size:25.00px;line-height:25.00px;color:#141418;font-weight:normal;left:-262.00px;width:1200px;text-align:center;transform:scaleX(0.8788);transform-origin:center center;-webkit-text-stroke:0.55px #141418;">Gran..) PH</div>
<div class="b ba" style="left:409px;top:1070px;width:116px;height:82px"></div>
<div class="t" style="top:1093.65px;font-size:35.61px;line-height:35.61px;color:#c2e2fc;font-weight:bold;left:-133.00px;width:1200px;text-align:center;transform:scaleX(0.8965);transform-origin:center center;-webkit-text-stroke:0.3px #c2e2fc;">VT03</div>
<div class="lb" style="left:409px;top:1158px;width:116px;height:32px;background:#7a8cbc;border-radius:3px 3px 6px 6px"></div>
<div class="t" style="top:1162.03px;font-size:25.00px;line-height:25.00px;color:#141418;font-weight:normal;left:-133.00px;width:1200px;text-align:center;transform:scaleX(0.8788);transform-origin:center center;-webkit-text-stroke:0.55px #141418;">Gran..) PH</div>
<div class="b" style="left:538px;top:1070px;width:116px;height:82px"></div>
<div class="t" style="top:1093.65px;font-size:35.61px;line-height:35.61px;color:#85858a;font-weight:bold;left:-4.00px;width:1200px;text-align:center;transform:scaleX(0.8965);transform-origin:center center;-webkit-text-stroke:0.3px #85858a;">VT04</div>
<div class="lb" style="left:538px;top:1158px;width:116px;height:32px;background:#7a8cbc;border-radius:3px 3px 6px 6px"></div>
<div class="g" style="left:593px;top:1175px;width:6.5px;height:3px;background:#15171c"></div>
<div class="b" style="left:667px;top:1070px;width:116px;height:82px"></div>
<div class="t" style="top:1093.65px;font-size:35.61px;line-height:35.61px;color:#85858a;font-weight:bold;left:125.00px;width:1200px;text-align:center;transform:scaleX(0.8965);transform-origin:center center;-webkit-text-stroke:0.3px #85858a;">VT05</div>
<div class="lb" style="left:667px;top:1158px;width:116px;height:32px;background:#7a8cbc;border-radius:3px 3px 6px 6px"></div>
<div class="g" style="left:722px;top:1175px;width:6.5px;height:3px;background:#15171c"></div>
<div class="b bd" style="left:796px;top:1070px;width:116px;height:82px"></div>
<div class="t" style="top:1093.65px;font-size:35.61px;line-height:35.61px;color:#434345;font-weight:bold;left:254.00px;width:1200px;text-align:center;transform:scaleX(0.8965);transform-origin:center center;-webkit-text-stroke:0.3px #434345;">VT06</div>
<div class="lb" style="left:796px;top:1158px;width:116px;height:32px;background:#4a5878;border-radius:3px 3px 6px 6px"></div>
<div class="g" style="left:851px;top:1175px;width:6.5px;height:3px;background:#15171c"></div>
<div class="b bd" style="left:924px;top:1070px;width:116px;height:82px"></div>
<div class="t" style="top:1093.65px;font-size:35.61px;line-height:35.61px;color:#434345;font-weight:bold;left:382.00px;width:1200px;text-align:center;transform:scaleX(0.8965);transform-origin:center center;-webkit-text-stroke:0.3px #434345;">VT07</div>
<div class="lb" style="left:924px;top:1158px;width:116px;height:32px;background:#4a5878;border-radius:3px 3px 6px 6px"></div>
<div class="g" style="left:979px;top:1175px;width:6.5px;height:3px;background:#15171c"></div>
<div class="b bd" style="left:1053px;top:1070px;width:116px;height:82px"></div>
<div class="t" style="top:1093.65px;font-size:35.61px;line-height:35.61px;color:#434345;font-weight:bold;left:511.00px;width:1200px;text-align:center;transform:scaleX(0.8965);transform-origin:center center;-webkit-text-stroke:0.3px #434345;">VT08</div>
<div class="lb" style="left:1053px;top:1158px;width:116px;height:32px;background:#4a5878;border-radius:3px 3px 6px 6px"></div>
<div class="g" style="left:1108px;top:1175px;width:6.5px;height:3px;background:#15171c"></div>
<div class="b bd" style="left:1182px;top:1070px;width:116px;height:82px"></div>
<div class="t" style="top:1093.65px;font-size:35.61px;line-height:35.61px;color:#434345;font-weight:bold;left:640.00px;width:1200px;text-align:center;transform:scaleX(0.8965);transform-origin:center center;-webkit-text-stroke:0.3px #434345;">VT09</div>
<div class="lb" style="left:1182px;top:1158px;width:116px;height:32px;background:#4a5878;border-radius:3px 3px 6px 6px"></div>
<div class="g" style="left:1237px;top:1175px;width:6.5px;height:3px;background:#15171c"></div>
<div class="b bd" style="left:1311px;top:1070px;width:116px;height:82px"></div>
<div class="t" style="top:1093.65px;font-size:35.61px;line-height:35.61px;color:#434345;font-weight:bold;left:769.00px;width:1200px;text-align:center;transform:scaleX(0.8965);transform-origin:center center;-webkit-text-stroke:0.3px #434345;">VT10</div>
<div class="lb" style="left:1311px;top:1158px;width:116px;height:32px;background:#4a5878;border-radius:3px 3px 6px 6px"></div>
<div class="g" style="left:1366px;top:1175px;width:6.5px;height:3px;background:#15171c"></div>
<div class="b bd" style="left:1440px;top:1070px;width:116px;height:82px"></div>
<div class="t" style="top:1093.65px;font-size:35.61px;line-height:35.61px;color:#434345;font-weight:bold;left:898.00px;width:1200px;text-align:center;transform:scaleX(0.9176);transform-origin:center center;-webkit-text-stroke:0.3px #434345;">VT11</div>
<div class="lb" style="left:1440px;top:1158px;width:116px;height:32px;background:#4a5878;border-radius:3px 3px 6px 6px"></div>
<div class="g" style="left:1495px;top:1175px;width:6.5px;height:3px;background:#15171c"></div>
<div class="b bd" style="left:1569px;top:1070px;width:116px;height:82px"></div>
<div class="t" style="top:1093.65px;font-size:35.61px;line-height:35.61px;color:#434345;font-weight:bold;left:1027.00px;width:1200px;text-align:center;transform:scaleX(0.8965);transform-origin:center center;-webkit-text-stroke:0.3px #434345;">VT12</div>
<div class="lb" style="left:1569px;top:1158px;width:116px;height:32px;background:#4a5878;border-radius:3px 3px 6px 6px"></div>
<div class="g" style="left:1624px;top:1175px;width:6.5px;height:3px;background:#15171c"></div>
<div class="b ba" style="left:1697px;top:1070px;width:209px;height:82px"></div>
<div class="t" style="top:1092.89px;font-size:37.21px;line-height:37.21px;color:#c2e2fc;font-weight:bold;left:1202.20px;width:1200px;text-align:center;transform:scaleX(0.7973);transform-origin:center center;-webkit-text-stroke:0.3px #c2e2fc;">SEL</div>
<div class="lb" style="left:1695px;top:1158px;width:213px;height:28px;background:#3f5075;border-radius:2px 2px 7px 7px"></div>
<div class="t" style="top:1161.96px;font-size:21.08px;line-height:21.08px;color:#fff;font-weight:normal;left:1201.50px;width:1200px;text-align:center;transform:scaleX(0.8699);transform-origin:center center;-webkit-text-stroke:0.55px #fff;">MODE</div>
</body></html>
